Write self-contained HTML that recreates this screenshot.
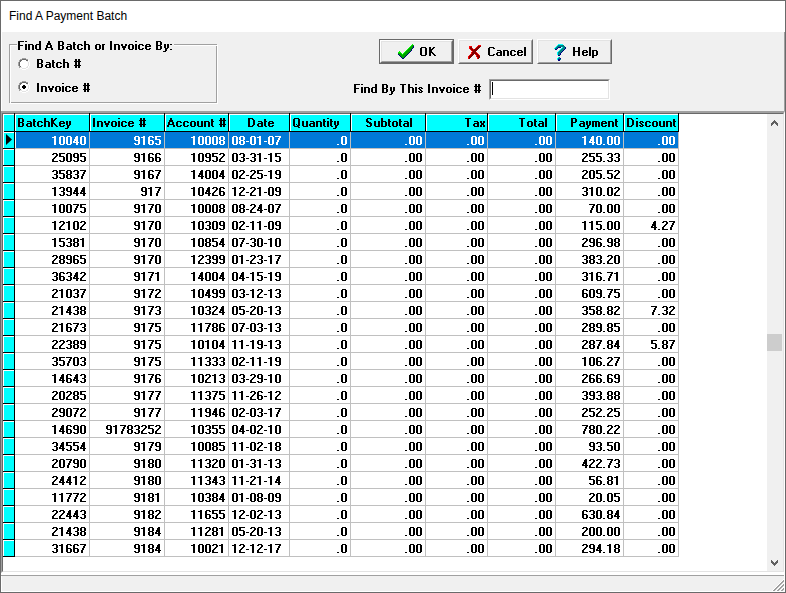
<!DOCTYPE html>
<html><head><meta charset="utf-8"><style>
*{margin:0;padding:0;box-sizing:border-box}
html,body{width:786px;height:593px;overflow:hidden;background:#f0f0f0}
body{position:relative;font-family:"Liberation Sans",sans-serif;color:#000}
.a{position:absolute}
</style></head><body>

<div class="a" style="left:0;top:0;width:786px;height:593px;border:1px solid #6a6a6a"></div>
<div class="a" style="left:1px;top:1px;width:784px;height:31px;background:#fff"></div>
<div class="a" style="left:9px;top:9px;font-size:12px;line-height:14px;white-space:pre">Find A Payment Batch</div>
<div class="a" style="left:1px;top:32px;width:1px;height:560px;background:#fff"></div>
<div class="a" style="left:784px;top:32px;width:1px;height:80px;background:#a0a0a0"></div>
<div class="a" style="left:9px;top:44px;width:208px;height:59px;border:1px solid #a0a0a0"></div>
<div class="a" style="left:10px;top:45px;width:208px;height:59px;border:1px solid #fff;border-left-color:#fff"></div>
<div class="a" style="left:10px;top:45px;width:206px;height:57px;border-top:0;border-left:1px solid #fff;border-top:1px solid #fff"></div>
<div class="a" style="left:17px;top:43px;width:157px;height:4px;background:#f0f0f0"></div>
<svg class="a" style="left:18px;top:58px" width="12" height="12" shape-rendering="crispEdges"><rect x="4" y="0" width="1" height="1" fill="#a0a0a0"/><rect x="5" y="0" width="1" height="1" fill="#a0a0a0"/><rect x="6" y="0" width="1" height="1" fill="#a0a0a0"/><rect x="7" y="0" width="1" height="1" fill="#a0a0a0"/><rect x="2" y="1" width="1" height="1" fill="#a0a0a0"/><rect x="3" y="1" width="1" height="1" fill="#a0a0a0"/><rect x="4" y="1" width="1" height="1" fill="#696969"/><rect x="5" y="1" width="1" height="1" fill="#696969"/><rect x="6" y="1" width="1" height="1" fill="#696969"/><rect x="7" y="1" width="1" height="1" fill="#696969"/><rect x="8" y="1" width="1" height="1" fill="#a0a0a0"/><rect x="9" y="1" width="1" height="1" fill="#a0a0a0"/><rect x="1" y="2" width="1" height="1" fill="#a0a0a0"/><rect x="2" y="2" width="1" height="1" fill="#696969"/><rect x="3" y="2" width="1" height="1" fill="#696969"/><rect x="4" y="2" width="1" height="1" fill="#fff"/><rect x="5" y="2" width="1" height="1" fill="#fff"/><rect x="6" y="2" width="1" height="1" fill="#fff"/><rect x="7" y="2" width="1" height="1" fill="#fff"/><rect x="8" y="2" width="1" height="1" fill="#696969"/><rect x="9" y="2" width="1" height="1" fill="#696969"/><rect x="10" y="2" width="1" height="1" fill="#fff"/><rect x="1" y="3" width="1" height="1" fill="#a0a0a0"/><rect x="2" y="3" width="1" height="1" fill="#696969"/><rect x="3" y="3" width="1" height="1" fill="#fff"/><rect x="4" y="3" width="1" height="1" fill="#fff"/><rect x="5" y="3" width="1" height="1" fill="#fff"/><rect x="6" y="3" width="1" height="1" fill="#fff"/><rect x="7" y="3" width="1" height="1" fill="#fff"/><rect x="8" y="3" width="1" height="1" fill="#fff"/><rect x="9" y="3" width="1" height="1" fill="#e3e3e3"/><rect x="10" y="3" width="1" height="1" fill="#fff"/><rect x="0" y="4" width="1" height="1" fill="#a0a0a0"/><rect x="1" y="4" width="1" height="1" fill="#696969"/><rect x="2" y="4" width="1" height="1" fill="#fff"/><rect x="3" y="4" width="1" height="1" fill="#fff"/><rect x="4" y="4" width="1" height="1" fill="#fff"/><rect x="5" y="4" width="1" height="1" fill="#fff"/><rect x="6" y="4" width="1" height="1" fill="#fff"/><rect x="7" y="4" width="1" height="1" fill="#fff"/><rect x="8" y="4" width="1" height="1" fill="#fff"/><rect x="9" y="4" width="1" height="1" fill="#fff"/><rect x="10" y="4" width="1" height="1" fill="#e3e3e3"/><rect x="11" y="4" width="1" height="1" fill="#fff"/><rect x="0" y="5" width="1" height="1" fill="#a0a0a0"/><rect x="1" y="5" width="1" height="1" fill="#696969"/><rect x="2" y="5" width="1" height="1" fill="#fff"/><rect x="3" y="5" width="1" height="1" fill="#fff"/><rect x="4" y="5" width="1" height="1" fill="#fff"/><rect x="5" y="5" width="1" height="1" fill="#fff"/><rect x="6" y="5" width="1" height="1" fill="#fff"/><rect x="7" y="5" width="1" height="1" fill="#fff"/><rect x="8" y="5" width="1" height="1" fill="#fff"/><rect x="9" y="5" width="1" height="1" fill="#fff"/><rect x="10" y="5" width="1" height="1" fill="#e3e3e3"/><rect x="11" y="5" width="1" height="1" fill="#fff"/><rect x="0" y="6" width="1" height="1" fill="#a0a0a0"/><rect x="1" y="6" width="1" height="1" fill="#696969"/><rect x="2" y="6" width="1" height="1" fill="#fff"/><rect x="3" y="6" width="1" height="1" fill="#fff"/><rect x="4" y="6" width="1" height="1" fill="#fff"/><rect x="5" y="6" width="1" height="1" fill="#fff"/><rect x="6" y="6" width="1" height="1" fill="#fff"/><rect x="7" y="6" width="1" height="1" fill="#fff"/><rect x="8" y="6" width="1" height="1" fill="#fff"/><rect x="9" y="6" width="1" height="1" fill="#fff"/><rect x="10" y="6" width="1" height="1" fill="#e3e3e3"/><rect x="11" y="6" width="1" height="1" fill="#fff"/><rect x="0" y="7" width="1" height="1" fill="#a0a0a0"/><rect x="1" y="7" width="1" height="1" fill="#696969"/><rect x="2" y="7" width="1" height="1" fill="#fff"/><rect x="3" y="7" width="1" height="1" fill="#fff"/><rect x="4" y="7" width="1" height="1" fill="#fff"/><rect x="5" y="7" width="1" height="1" fill="#fff"/><rect x="6" y="7" width="1" height="1" fill="#fff"/><rect x="7" y="7" width="1" height="1" fill="#fff"/><rect x="8" y="7" width="1" height="1" fill="#fff"/><rect x="9" y="7" width="1" height="1" fill="#fff"/><rect x="10" y="7" width="1" height="1" fill="#e3e3e3"/><rect x="11" y="7" width="1" height="1" fill="#fff"/><rect x="1" y="8" width="1" height="1" fill="#a0a0a0"/><rect x="2" y="8" width="1" height="1" fill="#696969"/><rect x="3" y="8" width="1" height="1" fill="#fff"/><rect x="4" y="8" width="1" height="1" fill="#fff"/><rect x="5" y="8" width="1" height="1" fill="#fff"/><rect x="6" y="8" width="1" height="1" fill="#fff"/><rect x="7" y="8" width="1" height="1" fill="#fff"/><rect x="8" y="8" width="1" height="1" fill="#fff"/><rect x="9" y="8" width="1" height="1" fill="#e3e3e3"/><rect x="10" y="8" width="1" height="1" fill="#fff"/><rect x="1" y="9" width="1" height="1" fill="#a0a0a0"/><rect x="2" y="9" width="1" height="1" fill="#e3e3e3"/><rect x="3" y="9" width="1" height="1" fill="#e3e3e3"/><rect x="4" y="9" width="1" height="1" fill="#fff"/><rect x="5" y="9" width="1" height="1" fill="#fff"/><rect x="6" y="9" width="1" height="1" fill="#fff"/><rect x="7" y="9" width="1" height="1" fill="#fff"/><rect x="8" y="9" width="1" height="1" fill="#e3e3e3"/><rect x="9" y="9" width="1" height="1" fill="#e3e3e3"/><rect x="10" y="9" width="1" height="1" fill="#fff"/><rect x="2" y="10" width="1" height="1" fill="#fff"/><rect x="3" y="10" width="1" height="1" fill="#fff"/><rect x="4" y="10" width="1" height="1" fill="#e3e3e3"/><rect x="5" y="10" width="1" height="1" fill="#e3e3e3"/><rect x="6" y="10" width="1" height="1" fill="#e3e3e3"/><rect x="7" y="10" width="1" height="1" fill="#e3e3e3"/><rect x="8" y="10" width="1" height="1" fill="#fff"/><rect x="9" y="10" width="1" height="1" fill="#fff"/><rect x="4" y="11" width="1" height="1" fill="#fff"/><rect x="5" y="11" width="1" height="1" fill="#fff"/><rect x="6" y="11" width="1" height="1" fill="#fff"/><rect x="7" y="11" width="1" height="1" fill="#fff"/></svg>
<svg class="a" style="left:18px;top:81px" width="12" height="12" shape-rendering="crispEdges"><rect x="4" y="0" width="1" height="1" fill="#a0a0a0"/><rect x="5" y="0" width="1" height="1" fill="#a0a0a0"/><rect x="6" y="0" width="1" height="1" fill="#a0a0a0"/><rect x="7" y="0" width="1" height="1" fill="#a0a0a0"/><rect x="2" y="1" width="1" height="1" fill="#a0a0a0"/><rect x="3" y="1" width="1" height="1" fill="#a0a0a0"/><rect x="4" y="1" width="1" height="1" fill="#696969"/><rect x="5" y="1" width="1" height="1" fill="#696969"/><rect x="6" y="1" width="1" height="1" fill="#696969"/><rect x="7" y="1" width="1" height="1" fill="#696969"/><rect x="8" y="1" width="1" height="1" fill="#a0a0a0"/><rect x="9" y="1" width="1" height="1" fill="#a0a0a0"/><rect x="1" y="2" width="1" height="1" fill="#a0a0a0"/><rect x="2" y="2" width="1" height="1" fill="#696969"/><rect x="3" y="2" width="1" height="1" fill="#696969"/><rect x="4" y="2" width="1" height="1" fill="#fff"/><rect x="5" y="2" width="1" height="1" fill="#fff"/><rect x="6" y="2" width="1" height="1" fill="#fff"/><rect x="7" y="2" width="1" height="1" fill="#fff"/><rect x="8" y="2" width="1" height="1" fill="#696969"/><rect x="9" y="2" width="1" height="1" fill="#696969"/><rect x="10" y="2" width="1" height="1" fill="#fff"/><rect x="1" y="3" width="1" height="1" fill="#a0a0a0"/><rect x="2" y="3" width="1" height="1" fill="#696969"/><rect x="3" y="3" width="1" height="1" fill="#fff"/><rect x="4" y="3" width="1" height="1" fill="#fff"/><rect x="5" y="3" width="1" height="1" fill="#fff"/><rect x="6" y="3" width="1" height="1" fill="#fff"/><rect x="7" y="3" width="1" height="1" fill="#fff"/><rect x="8" y="3" width="1" height="1" fill="#fff"/><rect x="9" y="3" width="1" height="1" fill="#e3e3e3"/><rect x="10" y="3" width="1" height="1" fill="#fff"/><rect x="0" y="4" width="1" height="1" fill="#a0a0a0"/><rect x="1" y="4" width="1" height="1" fill="#696969"/><rect x="2" y="4" width="1" height="1" fill="#fff"/><rect x="3" y="4" width="1" height="1" fill="#fff"/><rect x="4" y="4" width="1" height="1" fill="#fff"/><rect x="5" y="4" width="1" height="1" fill="#000"/><rect x="6" y="4" width="1" height="1" fill="#000"/><rect x="7" y="4" width="1" height="1" fill="#fff"/><rect x="8" y="4" width="1" height="1" fill="#fff"/><rect x="9" y="4" width="1" height="1" fill="#fff"/><rect x="10" y="4" width="1" height="1" fill="#e3e3e3"/><rect x="11" y="4" width="1" height="1" fill="#fff"/><rect x="0" y="5" width="1" height="1" fill="#a0a0a0"/><rect x="1" y="5" width="1" height="1" fill="#696969"/><rect x="2" y="5" width="1" height="1" fill="#fff"/><rect x="3" y="5" width="1" height="1" fill="#fff"/><rect x="4" y="5" width="1" height="1" fill="#000"/><rect x="5" y="5" width="1" height="1" fill="#000"/><rect x="6" y="5" width="1" height="1" fill="#000"/><rect x="7" y="5" width="1" height="1" fill="#000"/><rect x="8" y="5" width="1" height="1" fill="#fff"/><rect x="9" y="5" width="1" height="1" fill="#fff"/><rect x="10" y="5" width="1" height="1" fill="#e3e3e3"/><rect x="11" y="5" width="1" height="1" fill="#fff"/><rect x="0" y="6" width="1" height="1" fill="#a0a0a0"/><rect x="1" y="6" width="1" height="1" fill="#696969"/><rect x="2" y="6" width="1" height="1" fill="#fff"/><rect x="3" y="6" width="1" height="1" fill="#fff"/><rect x="4" y="6" width="1" height="1" fill="#000"/><rect x="5" y="6" width="1" height="1" fill="#000"/><rect x="6" y="6" width="1" height="1" fill="#000"/><rect x="7" y="6" width="1" height="1" fill="#000"/><rect x="8" y="6" width="1" height="1" fill="#fff"/><rect x="9" y="6" width="1" height="1" fill="#fff"/><rect x="10" y="6" width="1" height="1" fill="#e3e3e3"/><rect x="11" y="6" width="1" height="1" fill="#fff"/><rect x="0" y="7" width="1" height="1" fill="#a0a0a0"/><rect x="1" y="7" width="1" height="1" fill="#696969"/><rect x="2" y="7" width="1" height="1" fill="#fff"/><rect x="3" y="7" width="1" height="1" fill="#fff"/><rect x="4" y="7" width="1" height="1" fill="#fff"/><rect x="5" y="7" width="1" height="1" fill="#000"/><rect x="6" y="7" width="1" height="1" fill="#000"/><rect x="7" y="7" width="1" height="1" fill="#fff"/><rect x="8" y="7" width="1" height="1" fill="#fff"/><rect x="9" y="7" width="1" height="1" fill="#fff"/><rect x="10" y="7" width="1" height="1" fill="#e3e3e3"/><rect x="11" y="7" width="1" height="1" fill="#fff"/><rect x="1" y="8" width="1" height="1" fill="#a0a0a0"/><rect x="2" y="8" width="1" height="1" fill="#696969"/><rect x="3" y="8" width="1" height="1" fill="#fff"/><rect x="4" y="8" width="1" height="1" fill="#fff"/><rect x="5" y="8" width="1" height="1" fill="#fff"/><rect x="6" y="8" width="1" height="1" fill="#fff"/><rect x="7" y="8" width="1" height="1" fill="#fff"/><rect x="8" y="8" width="1" height="1" fill="#fff"/><rect x="9" y="8" width="1" height="1" fill="#e3e3e3"/><rect x="10" y="8" width="1" height="1" fill="#fff"/><rect x="1" y="9" width="1" height="1" fill="#a0a0a0"/><rect x="2" y="9" width="1" height="1" fill="#e3e3e3"/><rect x="3" y="9" width="1" height="1" fill="#e3e3e3"/><rect x="4" y="9" width="1" height="1" fill="#fff"/><rect x="5" y="9" width="1" height="1" fill="#fff"/><rect x="6" y="9" width="1" height="1" fill="#fff"/><rect x="7" y="9" width="1" height="1" fill="#fff"/><rect x="8" y="9" width="1" height="1" fill="#e3e3e3"/><rect x="9" y="9" width="1" height="1" fill="#e3e3e3"/><rect x="10" y="9" width="1" height="1" fill="#fff"/><rect x="2" y="10" width="1" height="1" fill="#fff"/><rect x="3" y="10" width="1" height="1" fill="#fff"/><rect x="4" y="10" width="1" height="1" fill="#e3e3e3"/><rect x="5" y="10" width="1" height="1" fill="#e3e3e3"/><rect x="6" y="10" width="1" height="1" fill="#e3e3e3"/><rect x="7" y="10" width="1" height="1" fill="#e3e3e3"/><rect x="8" y="10" width="1" height="1" fill="#fff"/><rect x="9" y="10" width="1" height="1" fill="#fff"/><rect x="4" y="11" width="1" height="1" fill="#fff"/><rect x="5" y="11" width="1" height="1" fill="#fff"/><rect x="6" y="11" width="1" height="1" fill="#fff"/><rect x="7" y="11" width="1" height="1" fill="#fff"/></svg>
<div class="a" style="left:379px;top:39px;width:75px;height:25px;border:1px solid #696969"></div><div class="a" style="left:380px;top:40px;width:73px;height:23px;border-top:1px solid #fff;border-left:1px solid #fff;border-right:1px solid #696969;border-bottom:1px solid #696969"></div><div class="a" style="left:381px;top:41px;width:71px;height:21px;border-top:1px solid #e3e3e3;border-left:1px solid #e3e3e3;border-right:1px solid #a0a0a0;border-bottom:1px solid #a0a0a0"></div><svg class="a" style="left:396px;top:42px" width="18" height="17" shape-rendering="crispEdges"><rect x="16" y="2" width="1" height="1" fill="#00ff00"/><rect x="15" y="3" width="1" height="1" fill="#00ff00"/><rect x="16" y="3" width="2" height="1" fill="#00a000"/><rect x="14" y="4" width="1" height="1" fill="#00ff00"/><rect x="15" y="4" width="2" height="1" fill="#00a000"/><rect x="17" y="4" width="1" height="1" fill="#000080"/><rect x="13" y="5" width="1" height="1" fill="#00ff00"/><rect x="14" y="5" width="3" height="1" fill="#00a000"/><rect x="17" y="5" width="1" height="1" fill="#000080"/><rect x="12" y="6" width="1" height="1" fill="#00ff00"/><rect x="13" y="6" width="3" height="1" fill="#00a000"/><rect x="16" y="6" width="1" height="1" fill="#000080"/><rect x="11" y="7" width="1" height="1" fill="#00ff00"/><rect x="12" y="7" width="3" height="1" fill="#00a000"/><rect x="15" y="7" width="1" height="1" fill="#000080"/><rect x="10" y="8" width="1" height="1" fill="#00ff00"/><rect x="11" y="8" width="4" height="1" fill="#00a000"/><rect x="15" y="8" width="1" height="1" fill="#000080"/><rect x="3" y="9" width="1" height="1" fill="#00ff00"/><rect x="9" y="9" width="1" height="1" fill="#00ff00"/><rect x="10" y="9" width="4" height="1" fill="#00a000"/><rect x="14" y="9" width="1" height="1" fill="#000080"/><rect x="2" y="10" width="3" height="1" fill="#00ff00"/><rect x="8" y="10" width="1" height="1" fill="#00ff00"/><rect x="9" y="10" width="4" height="1" fill="#00a000"/><rect x="13" y="10" width="1" height="1" fill="#000080"/><rect x="2" y="11" width="3" height="1" fill="#00a000"/><rect x="5" y="11" width="1" height="1" fill="#00ff00"/><rect x="7" y="11" width="1" height="1" fill="#00ff00"/><rect x="8" y="11" width="4" height="1" fill="#00a000"/><rect x="12" y="11" width="1" height="1" fill="#000080"/><rect x="2" y="12" width="1" height="1" fill="#000080"/><rect x="3" y="12" width="3" height="1" fill="#00a000"/><rect x="6" y="12" width="1" height="1" fill="#00ff00"/><rect x="7" y="12" width="4" height="1" fill="#00a000"/><rect x="11" y="12" width="1" height="1" fill="#000080"/><rect x="3" y="13" width="1" height="1" fill="#000080"/><rect x="4" y="13" width="6" height="1" fill="#00a000"/><rect x="10" y="13" width="1" height="1" fill="#000080"/><rect x="4" y="14" width="1" height="1" fill="#000080"/><rect x="5" y="14" width="4" height="1" fill="#00a000"/><rect x="9" y="14" width="1" height="1" fill="#000080"/><rect x="5" y="15" width="1" height="1" fill="#000080"/><rect x="6" y="15" width="2" height="1" fill="#00a000"/><rect x="8" y="15" width="1" height="1" fill="#000080"/><rect x="6" y="16" width="2" height="1" fill="#000080"/></svg>
<div class="a" style="left:458px;top:39px;width:75px;height:25px;border-top:1px solid #fff;border-left:1px solid #fff;border-right:1px solid #696969;border-bottom:1px solid #696969"></div><div class="a" style="left:459px;top:40px;width:73px;height:23px;border-top:1px solid #e3e3e3;border-left:1px solid #e3e3e3;border-right:1px solid #a0a0a0;border-bottom:1px solid #a0a0a0"></div><svg class="a" style="left:465px;top:42px" width="17" height="17" shape-rendering="crispEdges"><rect x="13" y="3" width="3" height="1" fill="#ff0000"/><rect x="4" y="4" width="3" height="1" fill="#ff0000"/><rect x="12" y="4" width="1" height="1" fill="#ff0000"/><rect x="13" y="4" width="3" height="1" fill="#800000"/><rect x="4" y="5" width="1" height="1" fill="#ff0000"/><rect x="5" y="5" width="2" height="1" fill="#800000"/><rect x="11" y="5" width="1" height="1" fill="#ff0000"/><rect x="12" y="5" width="3" height="1" fill="#800000"/><rect x="4" y="6" width="1" height="1" fill="#ff0000"/><rect x="5" y="6" width="2" height="1" fill="#800000"/><rect x="7" y="6" width="1" height="1" fill="#ff0000"/><rect x="10" y="6" width="1" height="1" fill="#ff0000"/><rect x="11" y="6" width="3" height="1" fill="#800000"/><rect x="5" y="7" width="1" height="1" fill="#ff0000"/><rect x="6" y="7" width="2" height="1" fill="#800000"/><rect x="8" y="7" width="1" height="1" fill="#ff0000"/><rect x="9" y="7" width="4" height="1" fill="#800000"/><rect x="6" y="8" width="1" height="1" fill="#ff0000"/><rect x="7" y="8" width="5" height="1" fill="#800000"/><rect x="7" y="9" width="1" height="1" fill="#ff0000"/><rect x="8" y="9" width="3" height="1" fill="#800000"/><rect x="6" y="10" width="1" height="1" fill="#ff0000"/><rect x="7" y="10" width="4" height="1" fill="#800000"/><rect x="11" y="10" width="1" height="1" fill="#ff0000"/><rect x="6" y="11" width="1" height="1" fill="#ff0000"/><rect x="7" y="11" width="5" height="1" fill="#800000"/><rect x="12" y="11" width="1" height="1" fill="#ff0000"/><rect x="5" y="12" width="1" height="1" fill="#ff0000"/><rect x="6" y="12" width="3" height="1" fill="#800000"/><rect x="10" y="12" width="1" height="1" fill="#ff0000"/><rect x="11" y="12" width="2" height="1" fill="#800000"/><rect x="13" y="12" width="1" height="1" fill="#ff0000"/><rect x="4" y="13" width="1" height="1" fill="#ff0000"/><rect x="5" y="13" width="3" height="1" fill="#800000"/><rect x="11" y="13" width="1" height="1" fill="#ff0000"/><rect x="12" y="13" width="2" height="1" fill="#800000"/><rect x="14" y="13" width="1" height="1" fill="#ff0000"/><rect x="3" y="14" width="1" height="1" fill="#ff0000"/><rect x="4" y="14" width="3" height="1" fill="#800000"/><rect x="11" y="14" width="1" height="1" fill="#ff0000"/><rect x="12" y="14" width="3" height="1" fill="#800000"/><rect x="3" y="15" width="1" height="1" fill="#ff0000"/><rect x="4" y="15" width="2" height="1" fill="#800000"/><rect x="12" y="15" width="1" height="1" fill="#ff0000"/><rect x="13" y="15" width="2" height="1" fill="#800000"/><rect x="3" y="16" width="1" height="1" fill="#ff0000"/><rect x="4" y="16" width="1" height="1" fill="#800000"/><rect x="12" y="16" width="1" height="1" fill="#ff0000"/><rect x="13" y="16" width="1" height="1" fill="#800000"/></svg>
<div class="a" style="left:537px;top:39px;width:75px;height:25px;border-top:1px solid #fff;border-left:1px solid #fff;border-right:1px solid #696969;border-bottom:1px solid #696969"></div><div class="a" style="left:538px;top:40px;width:73px;height:23px;border-top:1px solid #e3e3e3;border-left:1px solid #e3e3e3;border-right:1px solid #a0a0a0;border-bottom:1px solid #a0a0a0"></div><svg class="a" style="left:554px;top:42px" width="15" height="19" shape-rendering="crispEdges"><rect x="4" y="2" width="5" height="1" fill="#00ffff"/><rect x="3" y="3" width="1" height="1" fill="#00ffff"/><rect x="4" y="3" width="6" height="1" fill="#008080"/><rect x="2" y="4" width="1" height="1" fill="#00ffff"/><rect x="3" y="4" width="8" height="1" fill="#008080"/><rect x="1" y="5" width="1" height="1" fill="#00ffff"/><rect x="2" y="5" width="2" height="1" fill="#008080"/><rect x="4" y="5" width="3" height="1" fill="#000080"/><rect x="8" y="5" width="1" height="1" fill="#00ffff"/><rect x="9" y="5" width="2" height="1" fill="#008080"/><rect x="11" y="5" width="1" height="1" fill="#000080"/><rect x="0" y="6" width="1" height="1" fill="#00ffff"/><rect x="1" y="6" width="2" height="1" fill="#008080"/><rect x="3" y="6" width="1" height="1" fill="#000080"/><rect x="7" y="6" width="1" height="1" fill="#00ffff"/><rect x="8" y="6" width="3" height="1" fill="#008080"/><rect x="11" y="6" width="1" height="1" fill="#000080"/><rect x="1" y="7" width="2" height="1" fill="#000080"/><rect x="6" y="7" width="1" height="1" fill="#00ffff"/><rect x="7" y="7" width="3" height="1" fill="#008080"/><rect x="10" y="7" width="1" height="1" fill="#000080"/><rect x="5" y="8" width="1" height="1" fill="#00ffff"/><rect x="6" y="8" width="3" height="1" fill="#008080"/><rect x="9" y="8" width="1" height="1" fill="#000080"/><rect x="4" y="9" width="1" height="1" fill="#00ffff"/><rect x="5" y="9" width="3" height="1" fill="#008080"/><rect x="8" y="9" width="1" height="1" fill="#000080"/><rect x="3" y="10" width="1" height="1" fill="#00ffff"/><rect x="4" y="10" width="3" height="1" fill="#008080"/><rect x="7" y="10" width="1" height="1" fill="#000080"/><rect x="3" y="11" width="1" height="1" fill="#00ffff"/><rect x="4" y="11" width="2" height="1" fill="#008080"/><rect x="6" y="11" width="1" height="1" fill="#000080"/><rect x="3" y="12" width="1" height="1" fill="#00ffff"/><rect x="4" y="12" width="2" height="1" fill="#008080"/><rect x="6" y="12" width="1" height="1" fill="#000080"/><rect x="4" y="13" width="2" height="1" fill="#000080"/><rect x="4" y="15" width="1" height="1" fill="#00ffff"/><rect x="5" y="15" width="1" height="1" fill="#008080"/><rect x="3" y="16" width="1" height="1" fill="#00ffff"/><rect x="4" y="16" width="2" height="1" fill="#008080"/><rect x="6" y="16" width="1" height="1" fill="#000080"/><rect x="3" y="17" width="1" height="1" fill="#00ffff"/><rect x="4" y="17" width="2" height="1" fill="#000080"/><rect x="6" y="17" width="1" height="1" fill="#008080"/><rect x="4" y="18" width="2" height="1" fill="#000080"/></svg>
<div class="a" style="left:489px;top:79px;width:121px;height:21px;border-top:1px solid #a0a0a0;border-left:1px solid #a0a0a0;border-right:1px solid #fff;border-bottom:1px solid #fff"></div>
<div class="a" style="left:490px;top:80px;width:119px;height:19px;background:#fff;border-top:1px solid #696969;border-left:1px solid #696969;border-right:1px solid #e3e3e3;border-bottom:1px solid #e3e3e3"></div>
<div class="a" style="left:492px;top:82px;width:1px;height:13px;background:#000"></div>
<div class="a" style="left:1px;top:111px;width:784px;height:462px;border-top:2px solid #a0a0a0;border-left:1px solid #a0a0a0;border-right:1px solid #fff;border-bottom:1px solid #fff"></div>
<div class="a" style="left:2px;top:113px;width:782px;height:459px;background:#fff;border-top:1px solid #696969;border-left:1px solid #696969;border-right:1px solid #e3e3e3;border-bottom:1px solid #e3e3e3"></div>
<div class="a" style="left:3px;top:114px;width:676px;height:18px;background:#0ff"></div>
<div class="a" style="left:3px;top:131px;width:676px;height:1px;background:#000"></div>
<div class="a" style="left:3px;top:114px;width:675px;height:1px;background:#fff"></div>
<div class="a" style="left:3px;top:132px;width:12px;height:425px;background:#0ff"></div>
<div class="a" style="left:3px;top:114px;width:1px;height:442px;background:#fff"></div>
<div class="a" style="left:14px;top:113px;width:1px;height:19px;background:#000"></div>
<div class="a" style="left:89px;top:113px;width:1px;height:19px;background:#000"></div>
<div class="a" style="left:90px;top:114px;width:1px;height:17px;background:#fff"></div>
<div class="a" style="left:164px;top:113px;width:1px;height:19px;background:#000"></div>
<div class="a" style="left:165px;top:114px;width:1px;height:17px;background:#fff"></div>
<div class="a" style="left:228px;top:113px;width:1px;height:19px;background:#000"></div>
<div class="a" style="left:229px;top:114px;width:1px;height:17px;background:#fff"></div>
<div class="a" style="left:289px;top:113px;width:1px;height:19px;background:#000"></div>
<div class="a" style="left:290px;top:114px;width:1px;height:17px;background:#fff"></div>
<div class="a" style="left:350px;top:113px;width:1px;height:19px;background:#000"></div>
<div class="a" style="left:351px;top:114px;width:1px;height:17px;background:#fff"></div>
<div class="a" style="left:425px;top:113px;width:1px;height:19px;background:#000"></div>
<div class="a" style="left:426px;top:114px;width:1px;height:17px;background:#fff"></div>
<div class="a" style="left:487px;top:113px;width:1px;height:19px;background:#000"></div>
<div class="a" style="left:488px;top:114px;width:1px;height:17px;background:#fff"></div>
<div class="a" style="left:555px;top:113px;width:1px;height:19px;background:#000"></div>
<div class="a" style="left:556px;top:114px;width:1px;height:17px;background:#fff"></div>
<div class="a" style="left:623px;top:113px;width:1px;height:19px;background:#000"></div>
<div class="a" style="left:624px;top:114px;width:1px;height:17px;background:#fff"></div>
<div class="a" style="left:678px;top:113px;width:1px;height:19px;background:#000"></div>
<div class="a" style="left:679px;top:114px;width:1px;height:17px;background:#fff"></div>
<div class="a" style="left:15px;top:114px;width:1px;height:17px;background:#fff"></div>
<div class="a" style="left:14px;top:132px;width:1px;height:425px;background:#000"></div>
<div class="a" style="left:16px;top:132px;width:662px;height:16px;background:#0078d7"></div>
<div class="a" style="left:89px;top:132px;width:1px;height:425px;background:#c0c0c0"></div>
<div class="a" style="left:164px;top:132px;width:1px;height:425px;background:#c0c0c0"></div>
<div class="a" style="left:228px;top:132px;width:1px;height:425px;background:#c0c0c0"></div>
<div class="a" style="left:289px;top:132px;width:1px;height:425px;background:#c0c0c0"></div>
<div class="a" style="left:350px;top:132px;width:1px;height:425px;background:#c0c0c0"></div>
<div class="a" style="left:425px;top:132px;width:1px;height:425px;background:#c0c0c0"></div>
<div class="a" style="left:487px;top:132px;width:1px;height:425px;background:#c0c0c0"></div>
<div class="a" style="left:555px;top:132px;width:1px;height:425px;background:#c0c0c0"></div>
<div class="a" style="left:623px;top:132px;width:1px;height:425px;background:#c0c0c0"></div>
<div class="a" style="left:678px;top:132px;width:1px;height:425px;background:#c0c0c0"></div>
<div class="a" style="left:3px;top:132px;width:11px;height:1px;background:#fff"></div>
<div class="a" style="left:3px;top:148px;width:12px;height:1px;background:#000"></div>
<div class="a" style="left:15px;top:148px;width:664px;height:1px;background:#c0c0c0"></div>
<div class="a" style="left:3px;top:149px;width:11px;height:1px;background:#fff"></div>
<div class="a" style="left:3px;top:165px;width:12px;height:1px;background:#000"></div>
<div class="a" style="left:15px;top:165px;width:664px;height:1px;background:#c0c0c0"></div>
<div class="a" style="left:3px;top:166px;width:11px;height:1px;background:#fff"></div>
<div class="a" style="left:3px;top:182px;width:12px;height:1px;background:#000"></div>
<div class="a" style="left:15px;top:182px;width:664px;height:1px;background:#c0c0c0"></div>
<div class="a" style="left:3px;top:183px;width:11px;height:1px;background:#fff"></div>
<div class="a" style="left:3px;top:199px;width:12px;height:1px;background:#000"></div>
<div class="a" style="left:15px;top:199px;width:664px;height:1px;background:#c0c0c0"></div>
<div class="a" style="left:3px;top:200px;width:11px;height:1px;background:#fff"></div>
<div class="a" style="left:3px;top:216px;width:12px;height:1px;background:#000"></div>
<div class="a" style="left:15px;top:216px;width:664px;height:1px;background:#c0c0c0"></div>
<div class="a" style="left:3px;top:217px;width:11px;height:1px;background:#fff"></div>
<div class="a" style="left:3px;top:233px;width:12px;height:1px;background:#000"></div>
<div class="a" style="left:15px;top:233px;width:664px;height:1px;background:#c0c0c0"></div>
<div class="a" style="left:3px;top:234px;width:11px;height:1px;background:#fff"></div>
<div class="a" style="left:3px;top:250px;width:12px;height:1px;background:#000"></div>
<div class="a" style="left:15px;top:250px;width:664px;height:1px;background:#c0c0c0"></div>
<div class="a" style="left:3px;top:251px;width:11px;height:1px;background:#fff"></div>
<div class="a" style="left:3px;top:267px;width:12px;height:1px;background:#000"></div>
<div class="a" style="left:15px;top:267px;width:664px;height:1px;background:#c0c0c0"></div>
<div class="a" style="left:3px;top:268px;width:11px;height:1px;background:#fff"></div>
<div class="a" style="left:3px;top:284px;width:12px;height:1px;background:#000"></div>
<div class="a" style="left:15px;top:284px;width:664px;height:1px;background:#c0c0c0"></div>
<div class="a" style="left:3px;top:285px;width:11px;height:1px;background:#fff"></div>
<div class="a" style="left:3px;top:301px;width:12px;height:1px;background:#000"></div>
<div class="a" style="left:15px;top:301px;width:664px;height:1px;background:#c0c0c0"></div>
<div class="a" style="left:3px;top:302px;width:11px;height:1px;background:#fff"></div>
<div class="a" style="left:3px;top:318px;width:12px;height:1px;background:#000"></div>
<div class="a" style="left:15px;top:318px;width:664px;height:1px;background:#c0c0c0"></div>
<div class="a" style="left:3px;top:319px;width:11px;height:1px;background:#fff"></div>
<div class="a" style="left:3px;top:335px;width:12px;height:1px;background:#000"></div>
<div class="a" style="left:15px;top:335px;width:664px;height:1px;background:#c0c0c0"></div>
<div class="a" style="left:3px;top:336px;width:11px;height:1px;background:#fff"></div>
<div class="a" style="left:3px;top:352px;width:12px;height:1px;background:#000"></div>
<div class="a" style="left:15px;top:352px;width:664px;height:1px;background:#c0c0c0"></div>
<div class="a" style="left:3px;top:353px;width:11px;height:1px;background:#fff"></div>
<div class="a" style="left:3px;top:369px;width:12px;height:1px;background:#000"></div>
<div class="a" style="left:15px;top:369px;width:664px;height:1px;background:#c0c0c0"></div>
<div class="a" style="left:3px;top:370px;width:11px;height:1px;background:#fff"></div>
<div class="a" style="left:3px;top:386px;width:12px;height:1px;background:#000"></div>
<div class="a" style="left:15px;top:386px;width:664px;height:1px;background:#c0c0c0"></div>
<div class="a" style="left:3px;top:387px;width:11px;height:1px;background:#fff"></div>
<div class="a" style="left:3px;top:403px;width:12px;height:1px;background:#000"></div>
<div class="a" style="left:15px;top:403px;width:664px;height:1px;background:#c0c0c0"></div>
<div class="a" style="left:3px;top:404px;width:11px;height:1px;background:#fff"></div>
<div class="a" style="left:3px;top:420px;width:12px;height:1px;background:#000"></div>
<div class="a" style="left:15px;top:420px;width:664px;height:1px;background:#c0c0c0"></div>
<div class="a" style="left:3px;top:421px;width:11px;height:1px;background:#fff"></div>
<div class="a" style="left:3px;top:437px;width:12px;height:1px;background:#000"></div>
<div class="a" style="left:15px;top:437px;width:664px;height:1px;background:#c0c0c0"></div>
<div class="a" style="left:3px;top:438px;width:11px;height:1px;background:#fff"></div>
<div class="a" style="left:3px;top:454px;width:12px;height:1px;background:#000"></div>
<div class="a" style="left:15px;top:454px;width:664px;height:1px;background:#c0c0c0"></div>
<div class="a" style="left:3px;top:455px;width:11px;height:1px;background:#fff"></div>
<div class="a" style="left:3px;top:471px;width:12px;height:1px;background:#000"></div>
<div class="a" style="left:15px;top:471px;width:664px;height:1px;background:#c0c0c0"></div>
<div class="a" style="left:3px;top:472px;width:11px;height:1px;background:#fff"></div>
<div class="a" style="left:3px;top:488px;width:12px;height:1px;background:#000"></div>
<div class="a" style="left:15px;top:488px;width:664px;height:1px;background:#c0c0c0"></div>
<div class="a" style="left:3px;top:489px;width:11px;height:1px;background:#fff"></div>
<div class="a" style="left:3px;top:505px;width:12px;height:1px;background:#000"></div>
<div class="a" style="left:15px;top:505px;width:664px;height:1px;background:#c0c0c0"></div>
<div class="a" style="left:3px;top:506px;width:11px;height:1px;background:#fff"></div>
<div class="a" style="left:3px;top:522px;width:12px;height:1px;background:#000"></div>
<div class="a" style="left:15px;top:522px;width:664px;height:1px;background:#c0c0c0"></div>
<div class="a" style="left:3px;top:523px;width:11px;height:1px;background:#fff"></div>
<div class="a" style="left:3px;top:539px;width:12px;height:1px;background:#000"></div>
<div class="a" style="left:15px;top:539px;width:664px;height:1px;background:#c0c0c0"></div>
<div class="a" style="left:3px;top:540px;width:11px;height:1px;background:#fff"></div>
<div class="a" style="left:3px;top:556px;width:12px;height:1px;background:#000"></div>
<div class="a" style="left:15px;top:556px;width:664px;height:1px;background:#c0c0c0"></div>
<svg class="a" style="left:6px;top:134px" width="6" height="11" viewBox="0 0 6 11"><path d="M0 0 L6 5.5 L0 11 Z" fill="#000"/></svg>
<div class="a" style="left:0;top:0;width:786px;height:593px;color:transparent;font:bold 12px/14px 'Liberation Sans',sans-serif;white-space:pre"><div class="a" style="left:18px;top:39px">Find A Batch or Invoice By:</div><div class="a" style="left:37px;top:57px">Batch #</div><div class="a" style="left:37px;top:81px">Invoice #</div><div class="a" style="left:420px;top:45px">OK</div><div class="a" style="left:488px;top:45px">Cancel</div><div class="a" style="left:573px;top:45px">Help</div><div class="a" style="left:354px;top:82px">Find By This Invoice #</div><div class="a" style="left:18px;top:116px">BatchKey</div><div class="a" style="left:93px;top:116px">Invoice #</div><div class="a" style="left:168px;top:116px">Account #</div><div class="a" style="left:248px;top:116px">Date</div><div class="a" style="left:293px;top:116px">Quantity</div><div class="a" style="left:366px;top:116px">Subtotal</div><div class="a" style="left:465px;top:116px">Tax</div><div class="a" style="left:519px;top:116px">Total</div><div class="a" style="left:571px;top:116px">Payment</div><div class="a" style="left:627px;top:116px">Discount</div><div class="a" style="left:52px;top:134px">10040</div><div class="a" style="left:134px;top:134px">9165</div><div class="a" style="left:191px;top:134px">10008</div><div class="a" style="left:232px;top:134px">08-01-07</div><div class="a" style="left:337px;top:134px">.0</div><div class="a" style="left:405px;top:134px">.00</div><div class="a" style="left:467px;top:134px">.00</div><div class="a" style="left:535px;top:134px">.00</div><div class="a" style="left:582px;top:134px">140.00</div><div class="a" style="left:658px;top:134px">.00</div><div class="a" style="left:52px;top:151px">25095</div><div class="a" style="left:134px;top:151px">9166</div><div class="a" style="left:191px;top:151px">10952</div><div class="a" style="left:232px;top:151px">03-31-15</div><div class="a" style="left:337px;top:151px">.0</div><div class="a" style="left:405px;top:151px">.00</div><div class="a" style="left:467px;top:151px">.00</div><div class="a" style="left:535px;top:151px">.00</div><div class="a" style="left:582px;top:151px">255.33</div><div class="a" style="left:658px;top:151px">.00</div><div class="a" style="left:52px;top:168px">35837</div><div class="a" style="left:134px;top:168px">9167</div><div class="a" style="left:191px;top:168px">14004</div><div class="a" style="left:232px;top:168px">02-25-19</div><div class="a" style="left:337px;top:168px">.0</div><div class="a" style="left:405px;top:168px">.00</div><div class="a" style="left:467px;top:168px">.00</div><div class="a" style="left:535px;top:168px">.00</div><div class="a" style="left:582px;top:168px">205.52</div><div class="a" style="left:658px;top:168px">.00</div><div class="a" style="left:52px;top:185px">13944</div><div class="a" style="left:141px;top:185px">917</div><div class="a" style="left:191px;top:185px">10426</div><div class="a" style="left:232px;top:185px">12-21-09</div><div class="a" style="left:337px;top:185px">.0</div><div class="a" style="left:405px;top:185px">.00</div><div class="a" style="left:467px;top:185px">.00</div><div class="a" style="left:535px;top:185px">.00</div><div class="a" style="left:582px;top:185px">310.02</div><div class="a" style="left:658px;top:185px">.00</div><div class="a" style="left:52px;top:202px">10075</div><div class="a" style="left:134px;top:202px">9170</div><div class="a" style="left:191px;top:202px">10008</div><div class="a" style="left:232px;top:202px">08-24-07</div><div class="a" style="left:337px;top:202px">.0</div><div class="a" style="left:405px;top:202px">.00</div><div class="a" style="left:467px;top:202px">.00</div><div class="a" style="left:535px;top:202px">.00</div><div class="a" style="left:589px;top:202px">70.00</div><div class="a" style="left:658px;top:202px">.00</div><div class="a" style="left:52px;top:219px">12102</div><div class="a" style="left:134px;top:219px">9170</div><div class="a" style="left:191px;top:219px">10309</div><div class="a" style="left:232px;top:219px">02-11-09</div><div class="a" style="left:337px;top:219px">.0</div><div class="a" style="left:405px;top:219px">.00</div><div class="a" style="left:467px;top:219px">.00</div><div class="a" style="left:535px;top:219px">.00</div><div class="a" style="left:582px;top:219px">115.00</div><div class="a" style="left:651px;top:219px">4.27</div><div class="a" style="left:52px;top:236px">15381</div><div class="a" style="left:134px;top:236px">9170</div><div class="a" style="left:191px;top:236px">10854</div><div class="a" style="left:232px;top:236px">07-30-10</div><div class="a" style="left:337px;top:236px">.0</div><div class="a" style="left:405px;top:236px">.00</div><div class="a" style="left:467px;top:236px">.00</div><div class="a" style="left:535px;top:236px">.00</div><div class="a" style="left:582px;top:236px">296.98</div><div class="a" style="left:658px;top:236px">.00</div><div class="a" style="left:52px;top:253px">28965</div><div class="a" style="left:134px;top:253px">9170</div><div class="a" style="left:191px;top:253px">12399</div><div class="a" style="left:232px;top:253px">01-23-17</div><div class="a" style="left:337px;top:253px">.0</div><div class="a" style="left:405px;top:253px">.00</div><div class="a" style="left:467px;top:253px">.00</div><div class="a" style="left:535px;top:253px">.00</div><div class="a" style="left:582px;top:253px">383.20</div><div class="a" style="left:658px;top:253px">.00</div><div class="a" style="left:52px;top:270px">36342</div><div class="a" style="left:134px;top:270px">9171</div><div class="a" style="left:191px;top:270px">14004</div><div class="a" style="left:232px;top:270px">04-15-19</div><div class="a" style="left:337px;top:270px">.0</div><div class="a" style="left:405px;top:270px">.00</div><div class="a" style="left:467px;top:270px">.00</div><div class="a" style="left:535px;top:270px">.00</div><div class="a" style="left:582px;top:270px">316.71</div><div class="a" style="left:658px;top:270px">.00</div><div class="a" style="left:52px;top:287px">21037</div><div class="a" style="left:134px;top:287px">9172</div><div class="a" style="left:191px;top:287px">10499</div><div class="a" style="left:232px;top:287px">03-12-13</div><div class="a" style="left:337px;top:287px">.0</div><div class="a" style="left:405px;top:287px">.00</div><div class="a" style="left:467px;top:287px">.00</div><div class="a" style="left:535px;top:287px">.00</div><div class="a" style="left:582px;top:287px">609.75</div><div class="a" style="left:658px;top:287px">.00</div><div class="a" style="left:52px;top:304px">21438</div><div class="a" style="left:134px;top:304px">9173</div><div class="a" style="left:191px;top:304px">10324</div><div class="a" style="left:232px;top:304px">05-20-13</div><div class="a" style="left:337px;top:304px">.0</div><div class="a" style="left:405px;top:304px">.00</div><div class="a" style="left:467px;top:304px">.00</div><div class="a" style="left:535px;top:304px">.00</div><div class="a" style="left:582px;top:304px">358.82</div><div class="a" style="left:651px;top:304px">7.32</div><div class="a" style="left:52px;top:321px">21673</div><div class="a" style="left:134px;top:321px">9175</div><div class="a" style="left:191px;top:321px">11786</div><div class="a" style="left:232px;top:321px">07-03-13</div><div class="a" style="left:337px;top:321px">.0</div><div class="a" style="left:405px;top:321px">.00</div><div class="a" style="left:467px;top:321px">.00</div><div class="a" style="left:535px;top:321px">.00</div><div class="a" style="left:582px;top:321px">289.85</div><div class="a" style="left:658px;top:321px">.00</div><div class="a" style="left:52px;top:338px">22389</div><div class="a" style="left:134px;top:338px">9175</div><div class="a" style="left:191px;top:338px">10104</div><div class="a" style="left:232px;top:338px">11-19-13</div><div class="a" style="left:337px;top:338px">.0</div><div class="a" style="left:405px;top:338px">.00</div><div class="a" style="left:467px;top:338px">.00</div><div class="a" style="left:535px;top:338px">.00</div><div class="a" style="left:582px;top:338px">287.84</div><div class="a" style="left:651px;top:338px">5.87</div><div class="a" style="left:52px;top:355px">35703</div><div class="a" style="left:134px;top:355px">9175</div><div class="a" style="left:191px;top:355px">11333</div><div class="a" style="left:232px;top:355px">02-11-19</div><div class="a" style="left:337px;top:355px">.0</div><div class="a" style="left:405px;top:355px">.00</div><div class="a" style="left:467px;top:355px">.00</div><div class="a" style="left:535px;top:355px">.00</div><div class="a" style="left:582px;top:355px">106.27</div><div class="a" style="left:658px;top:355px">.00</div><div class="a" style="left:52px;top:372px">14643</div><div class="a" style="left:134px;top:372px">9176</div><div class="a" style="left:191px;top:372px">10213</div><div class="a" style="left:232px;top:372px">03-29-10</div><div class="a" style="left:337px;top:372px">.0</div><div class="a" style="left:405px;top:372px">.00</div><div class="a" style="left:467px;top:372px">.00</div><div class="a" style="left:535px;top:372px">.00</div><div class="a" style="left:582px;top:372px">266.69</div><div class="a" style="left:658px;top:372px">.00</div><div class="a" style="left:52px;top:389px">20285</div><div class="a" style="left:134px;top:389px">9177</div><div class="a" style="left:191px;top:389px">11375</div><div class="a" style="left:232px;top:389px">11-26-12</div><div class="a" style="left:337px;top:389px">.0</div><div class="a" style="left:405px;top:389px">.00</div><div class="a" style="left:467px;top:389px">.00</div><div class="a" style="left:535px;top:389px">.00</div><div class="a" style="left:582px;top:389px">393.88</div><div class="a" style="left:658px;top:389px">.00</div><div class="a" style="left:52px;top:406px">29072</div><div class="a" style="left:134px;top:406px">9177</div><div class="a" style="left:191px;top:406px">11946</div><div class="a" style="left:232px;top:406px">02-03-17</div><div class="a" style="left:337px;top:406px">.0</div><div class="a" style="left:405px;top:406px">.00</div><div class="a" style="left:467px;top:406px">.00</div><div class="a" style="left:535px;top:406px">.00</div><div class="a" style="left:582px;top:406px">252.25</div><div class="a" style="left:658px;top:406px">.00</div><div class="a" style="left:52px;top:423px">14690</div><div class="a" style="left:106px;top:423px">91783252</div><div class="a" style="left:191px;top:423px">10355</div><div class="a" style="left:232px;top:423px">04-02-10</div><div class="a" style="left:337px;top:423px">.0</div><div class="a" style="left:405px;top:423px">.00</div><div class="a" style="left:467px;top:423px">.00</div><div class="a" style="left:535px;top:423px">.00</div><div class="a" style="left:582px;top:423px">780.22</div><div class="a" style="left:658px;top:423px">.00</div><div class="a" style="left:52px;top:440px">34554</div><div class="a" style="left:134px;top:440px">9179</div><div class="a" style="left:191px;top:440px">10085</div><div class="a" style="left:232px;top:440px">11-02-18</div><div class="a" style="left:337px;top:440px">.0</div><div class="a" style="left:405px;top:440px">.00</div><div class="a" style="left:467px;top:440px">.00</div><div class="a" style="left:535px;top:440px">.00</div><div class="a" style="left:589px;top:440px">93.50</div><div class="a" style="left:658px;top:440px">.00</div><div class="a" style="left:52px;top:457px">20790</div><div class="a" style="left:134px;top:457px">9180</div><div class="a" style="left:191px;top:457px">11320</div><div class="a" style="left:232px;top:457px">01-31-13</div><div class="a" style="left:337px;top:457px">.0</div><div class="a" style="left:405px;top:457px">.00</div><div class="a" style="left:467px;top:457px">.00</div><div class="a" style="left:535px;top:457px">.00</div><div class="a" style="left:582px;top:457px">422.73</div><div class="a" style="left:658px;top:457px">.00</div><div class="a" style="left:52px;top:474px">24412</div><div class="a" style="left:134px;top:474px">9180</div><div class="a" style="left:191px;top:474px">11343</div><div class="a" style="left:232px;top:474px">11-21-14</div><div class="a" style="left:337px;top:474px">.0</div><div class="a" style="left:405px;top:474px">.00</div><div class="a" style="left:467px;top:474px">.00</div><div class="a" style="left:535px;top:474px">.00</div><div class="a" style="left:589px;top:474px">56.81</div><div class="a" style="left:658px;top:474px">.00</div><div class="a" style="left:52px;top:491px">11772</div><div class="a" style="left:134px;top:491px">9181</div><div class="a" style="left:191px;top:491px">10384</div><div class="a" style="left:232px;top:491px">01-08-09</div><div class="a" style="left:337px;top:491px">.0</div><div class="a" style="left:405px;top:491px">.00</div><div class="a" style="left:467px;top:491px">.00</div><div class="a" style="left:535px;top:491px">.00</div><div class="a" style="left:589px;top:491px">20.05</div><div class="a" style="left:658px;top:491px">.00</div><div class="a" style="left:52px;top:508px">22443</div><div class="a" style="left:134px;top:508px">9182</div><div class="a" style="left:191px;top:508px">11655</div><div class="a" style="left:232px;top:508px">12-02-13</div><div class="a" style="left:337px;top:508px">.0</div><div class="a" style="left:405px;top:508px">.00</div><div class="a" style="left:467px;top:508px">.00</div><div class="a" style="left:535px;top:508px">.00</div><div class="a" style="left:582px;top:508px">630.84</div><div class="a" style="left:658px;top:508px">.00</div><div class="a" style="left:52px;top:525px">21438</div><div class="a" style="left:134px;top:525px">9184</div><div class="a" style="left:191px;top:525px">11281</div><div class="a" style="left:232px;top:525px">05-20-13</div><div class="a" style="left:337px;top:525px">.0</div><div class="a" style="left:405px;top:525px">.00</div><div class="a" style="left:467px;top:525px">.00</div><div class="a" style="left:535px;top:525px">.00</div><div class="a" style="left:582px;top:525px">200.00</div><div class="a" style="left:658px;top:525px">.00</div><div class="a" style="left:52px;top:542px">31667</div><div class="a" style="left:134px;top:542px">9184</div><div class="a" style="left:191px;top:542px">10021</div><div class="a" style="left:232px;top:542px">12-12-17</div><div class="a" style="left:337px;top:542px">.0</div><div class="a" style="left:405px;top:542px">.00</div><div class="a" style="left:467px;top:542px">.00</div><div class="a" style="left:535px;top:542px">.00</div><div class="a" style="left:582px;top:542px">294.18</div><div class="a" style="left:658px;top:542px">.00</div></div>
<svg class="a" style="left:0;top:0" width="786" height="593" shape-rendering="crispEdges" fill="#000"><defs><path id="Gh" d="M1 0h2v1h-2zM4 0h2v1h-2zM1 1h2v1h-2zM4 1h2v1h-2zM0 2h7v1h-7zM1 3h2v1h-2zM4 3h2v1h-2zM1 4h2v1h-2zM4 4h2v1h-2zM1 5h2v1h-2zM4 5h2v1h-2zM0 6h7v1h-7zM1 7h2v1h-2zM4 7h2v1h-2zM1 8h2v1h-2zM4 8h2v1h-2z"/><path id="Gm" d="M0 5h3v1h-3z"/><path id="Gp" d="M0 8h2v1h-2z"/><path id="g0" d="M1 0h4v1h-4zM0 1h2v1h-2zM4 1h2v1h-2zM0 2h2v1h-2zM4 2h2v1h-2zM0 3h2v1h-2zM4 3h2v1h-2zM0 4h2v1h-2zM4 4h2v1h-2zM0 5h2v1h-2zM4 5h2v1h-2zM0 6h2v1h-2zM4 6h2v1h-2zM0 7h2v1h-2zM4 7h2v1h-2zM1 8h4v1h-4z"/><path id="g1" d="M2 0h2v1h-2zM0 1h4v1h-4zM2 2h2v1h-2zM2 3h2v1h-2zM2 4h2v1h-2zM2 5h2v1h-2zM2 6h2v1h-2zM2 7h2v1h-2zM2 8h2v1h-2z"/><path id="g2" d="M1 0h4v1h-4zM0 1h2v1h-2zM4 1h2v1h-2zM4 2h2v1h-2zM3 3h2v1h-2zM2 4h2v1h-2zM1 5h2v1h-2zM0 6h2v1h-2zM0 7h2v1h-2zM0 8h6v1h-6z"/><path id="g3" d="M1 0h4v1h-4zM0 1h2v1h-2zM4 1h2v1h-2zM4 2h2v1h-2zM4 3h2v1h-2zM2 4h3v1h-3zM4 5h2v1h-2zM4 6h2v1h-2zM0 7h2v1h-2zM4 7h2v1h-2zM1 8h4v1h-4z"/><path id="g4" d="M3 0h2v1h-2zM2 1h3v1h-3zM2 2h3v1h-3zM1 3h4v1h-4zM1 4h4v1h-4zM0 5h2v1h-2zM3 5h2v1h-2zM0 6h6v1h-6zM3 7h2v1h-2zM3 8h2v1h-2z"/><path id="g5" d="M0 0h6v1h-6zM0 1h2v1h-2zM0 2h2v1h-2zM0 3h5v1h-5zM4 4h2v1h-2zM4 5h2v1h-2zM4 6h2v1h-2zM0 7h2v1h-2zM4 7h2v1h-2zM1 8h4v1h-4z"/><path id="g6" d="M1 0h4v1h-4zM0 1h2v1h-2zM4 1h2v1h-2zM0 2h2v1h-2zM0 3h2v1h-2zM0 4h5v1h-5zM0 5h2v1h-2zM4 5h2v1h-2zM0 6h2v1h-2zM4 6h2v1h-2zM0 7h2v1h-2zM4 7h2v1h-2zM1 8h4v1h-4z"/><path id="g7" d="M0 0h6v1h-6zM4 1h2v1h-2zM3 2h2v1h-2zM3 3h2v1h-2zM2 4h2v1h-2zM2 5h2v1h-2zM1 6h2v1h-2zM1 7h2v1h-2zM1 8h2v1h-2z"/><path id="g8" d="M1 0h4v1h-4zM0 1h2v1h-2zM4 1h2v1h-2zM0 2h2v1h-2zM4 2h2v1h-2zM0 3h2v1h-2zM4 3h2v1h-2zM1 4h4v1h-4zM0 5h2v1h-2zM4 5h2v1h-2zM0 6h2v1h-2zM4 6h2v1h-2zM0 7h2v1h-2zM4 7h2v1h-2zM1 8h4v1h-4z"/><path id="g9" d="M1 0h4v1h-4zM0 1h2v1h-2zM4 1h2v1h-2zM0 2h2v1h-2zM4 2h2v1h-2zM0 3h2v1h-2zM4 3h2v1h-2zM1 4h5v1h-5zM4 5h2v1h-2zM4 6h2v1h-2zM0 7h2v1h-2zM4 7h2v1h-2zM1 8h4v1h-4z"/><path id="Gc" d="M0 3h2v1h-2zM0 8h2v1h-2z"/><path id="gA" d="M2 0h2v1h-2zM2 1h2v1h-2zM1 2h4v1h-4zM1 3h4v1h-4zM0 4h2v1h-2zM4 4h2v1h-2zM0 5h2v1h-2zM4 5h2v1h-2zM0 6h6v1h-6zM-1 7h2v1h-2zM5 7h2v1h-2zM-1 8h2v1h-2zM5 8h2v1h-2z"/><path id="gB" d="M0 0h5v1h-5zM0 1h2v1h-2zM4 1h2v1h-2zM0 2h2v1h-2zM4 2h2v1h-2zM0 3h2v1h-2zM4 3h2v1h-2zM0 4h5v1h-5zM0 5h2v1h-2zM4 5h2v1h-2zM0 6h2v1h-2zM4 6h2v1h-2zM0 7h2v1h-2zM4 7h2v1h-2zM0 8h5v1h-5z"/><path id="gC" d="M1 0h5v1h-5zM0 1h2v1h-2zM5 1h2v1h-2zM0 2h2v1h-2zM0 3h2v1h-2zM0 4h2v1h-2zM0 5h2v1h-2zM0 6h2v1h-2zM0 7h2v1h-2zM5 7h2v1h-2zM1 8h5v1h-5z"/><path id="gD" d="M0 0h5v1h-5zM0 1h2v1h-2zM4 1h2v1h-2zM0 2h2v1h-2zM5 2h2v1h-2zM0 3h2v1h-2zM5 3h2v1h-2zM0 4h2v1h-2zM5 4h2v1h-2zM0 5h2v1h-2zM5 5h2v1h-2zM0 6h2v1h-2zM5 6h2v1h-2zM0 7h2v1h-2zM4 7h2v1h-2zM0 8h5v1h-5z"/><path id="gF" d="M0 0h6v1h-6zM0 1h2v1h-2zM0 2h2v1h-2zM0 3h2v1h-2zM0 4h5v1h-5zM0 5h2v1h-2zM0 6h2v1h-2zM0 7h2v1h-2zM0 8h2v1h-2z"/><path id="gH" d="M0 0h2v1h-2zM5 0h2v1h-2zM0 1h2v1h-2zM5 1h2v1h-2zM0 2h2v1h-2zM5 2h2v1h-2zM0 3h2v1h-2zM5 3h2v1h-2zM0 4h7v1h-7zM0 5h2v1h-2zM5 5h2v1h-2zM0 6h2v1h-2zM5 6h2v1h-2zM0 7h2v1h-2zM5 7h2v1h-2zM0 8h2v1h-2zM5 8h2v1h-2z"/><path id="gI" d="M0 0h2v1h-2zM0 1h2v1h-2zM0 2h2v1h-2zM0 3h2v1h-2zM0 4h2v1h-2zM0 5h2v1h-2zM0 6h2v1h-2zM0 7h2v1h-2zM0 8h2v1h-2z"/><path id="gK" d="M0 0h2v1h-2zM4 0h2v1h-2zM0 1h2v1h-2zM3 1h2v1h-2zM0 2h4v1h-4zM0 3h3v1h-3zM0 4h3v1h-3zM0 5h4v1h-4zM0 6h2v1h-2zM3 6h2v1h-2zM0 7h2v1h-2zM4 7h2v1h-2zM0 8h2v1h-2zM5 8h2v1h-2z"/><path id="gO" d="M1 0h5v1h-5zM0 1h2v1h-2zM5 1h2v1h-2zM0 2h2v1h-2zM5 2h2v1h-2zM0 3h2v1h-2zM5 3h2v1h-2zM0 4h2v1h-2zM5 4h2v1h-2zM0 5h2v1h-2zM5 5h2v1h-2zM0 6h2v1h-2zM5 6h2v1h-2zM0 7h2v1h-2zM5 7h2v1h-2zM1 8h5v1h-5z"/><path id="gP" d="M0 0h5v1h-5zM0 1h2v1h-2zM4 1h2v1h-2zM0 2h2v1h-2zM4 2h2v1h-2zM0 3h2v1h-2zM4 3h2v1h-2zM0 4h5v1h-5zM0 5h2v1h-2zM0 6h2v1h-2zM0 7h2v1h-2zM0 8h2v1h-2z"/><path id="gQ" d="M1 0h5v1h-5zM0 1h2v1h-2zM5 1h2v1h-2zM0 2h2v1h-2zM5 2h2v1h-2zM0 3h2v1h-2zM5 3h2v1h-2zM0 4h2v1h-2zM5 4h2v1h-2zM0 5h2v1h-2zM5 5h2v1h-2zM0 6h2v1h-2zM3 6h1v1h-1zM5 6h2v1h-2zM0 7h2v1h-2zM4 7h3v1h-3zM1 8h5v1h-5zM5 9h2v1h-2z"/><path id="gS" d="M1 0h4v1h-4zM0 1h2v1h-2zM4 1h2v1h-2zM0 2h2v1h-2zM0 3h3v1h-3zM1 4h4v1h-4zM3 5h3v1h-3zM4 6h2v1h-2zM0 7h2v1h-2zM4 7h2v1h-2zM1 8h4v1h-4z"/><path id="gT" d="M0 0h6v1h-6zM2 1h2v1h-2zM2 2h2v1h-2zM2 3h2v1h-2zM2 4h2v1h-2zM2 5h2v1h-2zM2 6h2v1h-2zM2 7h2v1h-2zM2 8h2v1h-2z"/><path id="ga" d="M1 3h4v1h-4zM4 4h2v1h-2zM1 5h5v1h-5zM0 6h2v1h-2zM4 6h2v1h-2zM0 7h2v1h-2zM4 7h2v1h-2zM1 8h5v1h-5z"/><path id="gb" d="M0 0h2v1h-2zM0 1h2v1h-2zM0 2h2v1h-2zM0 3h5v1h-5zM0 4h2v1h-2zM4 4h2v1h-2zM0 5h2v1h-2zM4 5h2v1h-2zM0 6h2v1h-2zM4 6h2v1h-2zM0 7h2v1h-2zM4 7h2v1h-2zM0 8h5v1h-5z"/><path id="gc" d="M1 3h4v1h-4zM0 4h2v1h-2zM4 4h2v1h-2zM0 5h2v1h-2zM0 6h2v1h-2zM0 7h2v1h-2zM4 7h2v1h-2zM1 8h4v1h-4z"/><path id="gd" d="M4 0h2v1h-2zM4 1h2v1h-2zM4 2h2v1h-2zM1 3h5v1h-5zM0 4h2v1h-2zM4 4h2v1h-2zM0 5h2v1h-2zM4 5h2v1h-2zM0 6h2v1h-2zM4 6h2v1h-2zM0 7h2v1h-2zM4 7h2v1h-2zM1 8h5v1h-5z"/><path id="ge" d="M1 3h4v1h-4zM0 4h2v1h-2zM4 4h2v1h-2zM0 5h6v1h-6zM0 6h2v1h-2zM0 7h2v1h-2zM4 7h2v1h-2zM1 8h4v1h-4z"/><path id="gh" d="M0 0h2v1h-2zM0 1h2v1h-2zM0 2h2v1h-2zM0 3h5v1h-5zM0 4h2v1h-2zM4 4h2v1h-2zM0 5h2v1h-2zM4 5h2v1h-2zM0 6h2v1h-2zM4 6h2v1h-2zM0 7h2v1h-2zM4 7h2v1h-2zM0 8h2v1h-2zM4 8h2v1h-2z"/><path id="gi" d="M0 0h2v1h-2zM0 3h2v1h-2zM0 4h2v1h-2zM0 5h2v1h-2zM0 6h2v1h-2zM0 7h2v1h-2zM0 8h2v1h-2z"/><path id="gl" d="M0 0h2v1h-2zM0 1h2v1h-2zM0 2h2v1h-2zM0 3h2v1h-2zM0 4h2v1h-2zM0 5h2v1h-2zM0 6h2v1h-2zM0 7h2v1h-2zM0 8h2v1h-2z"/><path id="gm" d="M0 3h7v1h-7zM0 4h2v1h-2zM3 4h2v1h-2zM6 4h2v1h-2zM0 5h2v1h-2zM3 5h2v1h-2zM6 5h2v1h-2zM0 6h2v1h-2zM3 6h2v1h-2zM6 6h2v1h-2zM0 7h2v1h-2zM3 7h2v1h-2zM6 7h2v1h-2zM0 8h2v1h-2zM3 8h2v1h-2zM6 8h2v1h-2z"/><path id="gn" d="M0 3h5v1h-5zM0 4h2v1h-2zM4 4h2v1h-2zM0 5h2v1h-2zM4 5h2v1h-2zM0 6h2v1h-2zM4 6h2v1h-2zM0 7h2v1h-2zM4 7h2v1h-2zM0 8h2v1h-2zM4 8h2v1h-2z"/><path id="go" d="M1 3h4v1h-4zM0 4h2v1h-2zM4 4h2v1h-2zM0 5h2v1h-2zM4 5h2v1h-2zM0 6h2v1h-2zM4 6h2v1h-2zM0 7h2v1h-2zM4 7h2v1h-2zM1 8h4v1h-4z"/><path id="gp" d="M0 3h5v1h-5zM0 4h2v1h-2zM4 4h2v1h-2zM0 5h2v1h-2zM4 5h2v1h-2zM0 6h2v1h-2zM4 6h2v1h-2zM0 7h2v1h-2zM4 7h2v1h-2zM0 8h5v1h-5zM0 9h2v1h-2zM0 10h2v1h-2z"/><path id="gr" d="M0 3h3v1h-3zM0 4h2v1h-2zM0 5h2v1h-2zM0 6h2v1h-2zM0 7h2v1h-2zM0 8h2v1h-2z"/><path id="gs" d="M1 3h3v1h-3zM0 4h2v1h-2zM3 4h2v1h-2zM1 5h2v1h-2zM2 6h2v1h-2zM0 7h2v1h-2zM3 7h2v1h-2zM1 8h3v1h-3z"/><path id="gt" d="M0 1h2v1h-2zM0 2h2v1h-2zM0 3h3v1h-3zM0 4h2v1h-2zM0 5h2v1h-2zM0 6h2v1h-2zM0 7h2v1h-2zM1 8h2v1h-2z"/><path id="gu" d="M0 3h2v1h-2zM4 3h2v1h-2zM0 4h2v1h-2zM4 4h2v1h-2zM0 5h2v1h-2zM4 5h2v1h-2zM0 6h2v1h-2zM4 6h2v1h-2zM0 7h2v1h-2zM4 7h2v1h-2zM1 8h5v1h-5z"/><path id="gv" d="M0 3h2v1h-2zM4 3h2v1h-2zM0 4h2v1h-2zM4 4h2v1h-2zM1 5h4v1h-4zM1 6h4v1h-4zM2 7h2v1h-2zM2 8h2v1h-2z"/><path id="gx" d="M0 3h2v1h-2zM3 3h2v1h-2zM0 4h2v1h-2zM3 4h2v1h-2zM1 5h3v1h-3zM1 6h3v1h-3zM0 7h2v1h-2zM3 7h2v1h-2zM0 8h2v1h-2zM3 8h2v1h-2z"/><path id="gy" d="M0 3h2v1h-2zM3 3h2v1h-2zM0 4h2v1h-2zM3 4h2v1h-2zM0 5h2v1h-2zM3 5h2v1h-2zM0 6h2v1h-2zM3 6h2v1h-2zM1 7h3v1h-3zM1 8h2v1h-2zM1 9h2v1h-2zM-1 10h3v1h-3z"/></defs><use href="#gF" x="18" y="41"/><use href="#gi" x="25" y="41"/><use href="#gn" x="28" y="41"/><use href="#gd" x="35" y="41"/><use href="#gA" x="46" y="41"/><use href="#gB" x="58" y="41"/><use href="#ga" x="66" y="41"/><use href="#gt" x="73" y="41"/><use href="#gc" x="77" y="41"/><use href="#gh" x="84" y="41"/><use href="#go" x="95" y="41"/><use href="#gr" x="102" y="41"/><use href="#gI" x="110" y="41"/><use href="#gn" x="114" y="41"/><use href="#gv" x="121" y="41"/><use href="#go" x="128" y="41"/><use href="#gi" x="135" y="41"/><use href="#gc" x="138" y="41"/><use href="#ge" x="145" y="41"/><use href="#gB" x="156" y="41"/><use href="#gy" x="164" y="41"/><use href="#Gc" x="170" y="41"/><use href="#gB" x="37" y="59"/><use href="#ga" x="45" y="59"/><use href="#gt" x="52" y="59"/><use href="#gc" x="56" y="59"/><use href="#gh" x="63" y="59"/><use href="#Gh" x="74" y="59"/><use href="#gI" x="37" y="83"/><use href="#gn" x="41" y="83"/><use href="#gv" x="48" y="83"/><use href="#go" x="55" y="83"/><use href="#gi" x="62" y="83"/><use href="#gc" x="65" y="83"/><use href="#ge" x="72" y="83"/><use href="#Gh" x="83" y="83"/><use href="#gO" x="420" y="47"/><use href="#gK" x="429" y="47"/><use href="#gC" x="488" y="47"/><use href="#ga" x="496" y="47"/><use href="#gn" x="503" y="47"/><use href="#gc" x="510" y="47"/><use href="#ge" x="517" y="47"/><use href="#gl" x="524" y="47"/><use href="#gH" x="573" y="47"/><use href="#ge" x="582" y="47"/><use href="#gl" x="589" y="47"/><use href="#gp" x="592" y="47"/><use href="#gF" x="354" y="84"/><use href="#gi" x="361" y="84"/><use href="#gn" x="364" y="84"/><use href="#gd" x="371" y="84"/><use href="#gB" x="382" y="84"/><use href="#gy" x="390" y="84"/><use href="#gT" x="400" y="84"/><use href="#gh" x="408" y="84"/><use href="#gi" x="415" y="84"/><use href="#gs" x="418" y="84"/><use href="#gI" x="428" y="84"/><use href="#gn" x="432" y="84"/><use href="#gv" x="439" y="84"/><use href="#go" x="446" y="84"/><use href="#gi" x="453" y="84"/><use href="#gc" x="456" y="84"/><use href="#ge" x="463" y="84"/><use href="#Gh" x="474" y="84"/><use href="#gB" x="18" y="118"/><use href="#ga" x="26" y="118"/><use href="#gt" x="33" y="118"/><use href="#gc" x="37" y="118"/><use href="#gh" x="44" y="118"/><use href="#gK" x="51" y="118"/><use href="#ge" x="59" y="118"/><use href="#gy" x="66" y="118"/><use href="#gI" x="93" y="118"/><use href="#gn" x="97" y="118"/><use href="#gv" x="104" y="118"/><use href="#go" x="111" y="118"/><use href="#gi" x="118" y="118"/><use href="#gc" x="121" y="118"/><use href="#ge" x="128" y="118"/><use href="#Gh" x="139" y="118"/><use href="#gA" x="168" y="118"/><use href="#gc" x="176" y="118"/><use href="#gc" x="183" y="118"/><use href="#go" x="190" y="118"/><use href="#gu" x="197" y="118"/><use href="#gn" x="204" y="118"/><use href="#gt" x="211" y="118"/><use href="#Gh" x="219" y="118"/><use href="#gD" x="248" y="118"/><use href="#ga" x="257" y="118"/><use href="#gt" x="264" y="118"/><use href="#ge" x="268" y="118"/><use href="#gQ" x="293" y="118"/><use href="#gu" x="302" y="118"/><use href="#ga" x="309" y="118"/><use href="#gn" x="316" y="118"/><use href="#gt" x="323" y="118"/><use href="#gi" x="327" y="118"/><use href="#gt" x="330" y="118"/><use href="#gy" x="334" y="118"/><use href="#gS" x="366" y="118"/><use href="#gu" x="374" y="118"/><use href="#gb" x="381" y="118"/><use href="#gt" x="388" y="118"/><use href="#go" x="392" y="118"/><use href="#gt" x="399" y="118"/><use href="#ga" x="403" y="118"/><use href="#gl" x="410" y="118"/><use href="#gT" x="465" y="118"/><use href="#ga" x="473" y="118"/><use href="#gx" x="480" y="118"/><use href="#gT" x="519" y="118"/><use href="#go" x="527" y="118"/><use href="#gt" x="534" y="118"/><use href="#ga" x="538" y="118"/><use href="#gl" x="545" y="118"/><use href="#gP" x="571" y="118"/><use href="#ga" x="579" y="118"/><use href="#gy" x="586" y="118"/><use href="#gm" x="592" y="118"/><use href="#ge" x="601" y="118"/><use href="#gn" x="608" y="118"/><use href="#gt" x="615" y="118"/><use href="#gD" x="627" y="118"/><use href="#gi" x="636" y="118"/><use href="#gs" x="639" y="118"/><use href="#gc" x="645" y="118"/><use href="#go" x="652" y="118"/><use href="#gu" x="659" y="118"/><use href="#gn" x="666" y="118"/><use href="#gt" x="673" y="118"/><use href="#g1" x="52" y="136" fill="#fff"/><use href="#g0" x="59" y="136" fill="#fff"/><use href="#g0" x="66" y="136" fill="#fff"/><use href="#g4" x="73" y="136" fill="#fff"/><use href="#g0" x="80" y="136" fill="#fff"/><use href="#g9" x="134" y="136" fill="#fff"/><use href="#g1" x="141" y="136" fill="#fff"/><use href="#g6" x="148" y="136" fill="#fff"/><use href="#g5" x="155" y="136" fill="#fff"/><use href="#g1" x="191" y="136" fill="#fff"/><use href="#g0" x="198" y="136" fill="#fff"/><use href="#g0" x="205" y="136" fill="#fff"/><use href="#g0" x="212" y="136" fill="#fff"/><use href="#g8" x="219" y="136" fill="#fff"/><use href="#g0" x="232" y="136" fill="#fff"/><use href="#g8" x="239" y="136" fill="#fff"/><use href="#Gm" x="246" y="136" fill="#fff"/><use href="#g0" x="250" y="136" fill="#fff"/><use href="#g1" x="257" y="136" fill="#fff"/><use href="#Gm" x="264" y="136" fill="#fff"/><use href="#g0" x="268" y="136" fill="#fff"/><use href="#g7" x="275" y="136" fill="#fff"/><use href="#Gp" x="337" y="136" fill="#fff"/><use href="#g0" x="341" y="136" fill="#fff"/><use href="#Gp" x="405" y="136" fill="#fff"/><use href="#g0" x="409" y="136" fill="#fff"/><use href="#g0" x="416" y="136" fill="#fff"/><use href="#Gp" x="467" y="136" fill="#fff"/><use href="#g0" x="471" y="136" fill="#fff"/><use href="#g0" x="478" y="136" fill="#fff"/><use href="#Gp" x="535" y="136" fill="#fff"/><use href="#g0" x="539" y="136" fill="#fff"/><use href="#g0" x="546" y="136" fill="#fff"/><use href="#g1" x="582" y="136" fill="#fff"/><use href="#g4" x="589" y="136" fill="#fff"/><use href="#g0" x="596" y="136" fill="#fff"/><use href="#Gp" x="603" y="136" fill="#fff"/><use href="#g0" x="607" y="136" fill="#fff"/><use href="#g0" x="614" y="136" fill="#fff"/><use href="#Gp" x="658" y="136" fill="#fff"/><use href="#g0" x="662" y="136" fill="#fff"/><use href="#g0" x="669" y="136" fill="#fff"/><use href="#g2" x="52" y="153"/><use href="#g5" x="59" y="153"/><use href="#g0" x="66" y="153"/><use href="#g9" x="73" y="153"/><use href="#g5" x="80" y="153"/><use href="#g9" x="134" y="153"/><use href="#g1" x="141" y="153"/><use href="#g6" x="148" y="153"/><use href="#g6" x="155" y="153"/><use href="#g1" x="191" y="153"/><use href="#g0" x="198" y="153"/><use href="#g9" x="205" y="153"/><use href="#g5" x="212" y="153"/><use href="#g2" x="219" y="153"/><use href="#g0" x="232" y="153"/><use href="#g3" x="239" y="153"/><use href="#Gm" x="246" y="153"/><use href="#g3" x="250" y="153"/><use href="#g1" x="257" y="153"/><use href="#Gm" x="264" y="153"/><use href="#g1" x="268" y="153"/><use href="#g5" x="275" y="153"/><use href="#Gp" x="337" y="153"/><use href="#g0" x="341" y="153"/><use href="#Gp" x="405" y="153"/><use href="#g0" x="409" y="153"/><use href="#g0" x="416" y="153"/><use href="#Gp" x="467" y="153"/><use href="#g0" x="471" y="153"/><use href="#g0" x="478" y="153"/><use href="#Gp" x="535" y="153"/><use href="#g0" x="539" y="153"/><use href="#g0" x="546" y="153"/><use href="#g2" x="582" y="153"/><use href="#g5" x="589" y="153"/><use href="#g5" x="596" y="153"/><use href="#Gp" x="603" y="153"/><use href="#g3" x="607" y="153"/><use href="#g3" x="614" y="153"/><use href="#Gp" x="658" y="153"/><use href="#g0" x="662" y="153"/><use href="#g0" x="669" y="153"/><use href="#g3" x="52" y="170"/><use href="#g5" x="59" y="170"/><use href="#g8" x="66" y="170"/><use href="#g3" x="73" y="170"/><use href="#g7" x="80" y="170"/><use href="#g9" x="134" y="170"/><use href="#g1" x="141" y="170"/><use href="#g6" x="148" y="170"/><use href="#g7" x="155" y="170"/><use href="#g1" x="191" y="170"/><use href="#g4" x="198" y="170"/><use href="#g0" x="205" y="170"/><use href="#g0" x="212" y="170"/><use href="#g4" x="219" y="170"/><use href="#g0" x="232" y="170"/><use href="#g2" x="239" y="170"/><use href="#Gm" x="246" y="170"/><use href="#g2" x="250" y="170"/><use href="#g5" x="257" y="170"/><use href="#Gm" x="264" y="170"/><use href="#g1" x="268" y="170"/><use href="#g9" x="275" y="170"/><use href="#Gp" x="337" y="170"/><use href="#g0" x="341" y="170"/><use href="#Gp" x="405" y="170"/><use href="#g0" x="409" y="170"/><use href="#g0" x="416" y="170"/><use href="#Gp" x="467" y="170"/><use href="#g0" x="471" y="170"/><use href="#g0" x="478" y="170"/><use href="#Gp" x="535" y="170"/><use href="#g0" x="539" y="170"/><use href="#g0" x="546" y="170"/><use href="#g2" x="582" y="170"/><use href="#g0" x="589" y="170"/><use href="#g5" x="596" y="170"/><use href="#Gp" x="603" y="170"/><use href="#g5" x="607" y="170"/><use href="#g2" x="614" y="170"/><use href="#Gp" x="658" y="170"/><use href="#g0" x="662" y="170"/><use href="#g0" x="669" y="170"/><use href="#g1" x="52" y="187"/><use href="#g3" x="59" y="187"/><use href="#g9" x="66" y="187"/><use href="#g4" x="73" y="187"/><use href="#g4" x="80" y="187"/><use href="#g9" x="141" y="187"/><use href="#g1" x="148" y="187"/><use href="#g7" x="155" y="187"/><use href="#g1" x="191" y="187"/><use href="#g0" x="198" y="187"/><use href="#g4" x="205" y="187"/><use href="#g2" x="212" y="187"/><use href="#g6" x="219" y="187"/><use href="#g1" x="232" y="187"/><use href="#g2" x="239" y="187"/><use href="#Gm" x="246" y="187"/><use href="#g2" x="250" y="187"/><use href="#g1" x="257" y="187"/><use href="#Gm" x="264" y="187"/><use href="#g0" x="268" y="187"/><use href="#g9" x="275" y="187"/><use href="#Gp" x="337" y="187"/><use href="#g0" x="341" y="187"/><use href="#Gp" x="405" y="187"/><use href="#g0" x="409" y="187"/><use href="#g0" x="416" y="187"/><use href="#Gp" x="467" y="187"/><use href="#g0" x="471" y="187"/><use href="#g0" x="478" y="187"/><use href="#Gp" x="535" y="187"/><use href="#g0" x="539" y="187"/><use href="#g0" x="546" y="187"/><use href="#g3" x="582" y="187"/><use href="#g1" x="589" y="187"/><use href="#g0" x="596" y="187"/><use href="#Gp" x="603" y="187"/><use href="#g0" x="607" y="187"/><use href="#g2" x="614" y="187"/><use href="#Gp" x="658" y="187"/><use href="#g0" x="662" y="187"/><use href="#g0" x="669" y="187"/><use href="#g1" x="52" y="204"/><use href="#g0" x="59" y="204"/><use href="#g0" x="66" y="204"/><use href="#g7" x="73" y="204"/><use href="#g5" x="80" y="204"/><use href="#g9" x="134" y="204"/><use href="#g1" x="141" y="204"/><use href="#g7" x="148" y="204"/><use href="#g0" x="155" y="204"/><use href="#g1" x="191" y="204"/><use href="#g0" x="198" y="204"/><use href="#g0" x="205" y="204"/><use href="#g0" x="212" y="204"/><use href="#g8" x="219" y="204"/><use href="#g0" x="232" y="204"/><use href="#g8" x="239" y="204"/><use href="#Gm" x="246" y="204"/><use href="#g2" x="250" y="204"/><use href="#g4" x="257" y="204"/><use href="#Gm" x="264" y="204"/><use href="#g0" x="268" y="204"/><use href="#g7" x="275" y="204"/><use href="#Gp" x="337" y="204"/><use href="#g0" x="341" y="204"/><use href="#Gp" x="405" y="204"/><use href="#g0" x="409" y="204"/><use href="#g0" x="416" y="204"/><use href="#Gp" x="467" y="204"/><use href="#g0" x="471" y="204"/><use href="#g0" x="478" y="204"/><use href="#Gp" x="535" y="204"/><use href="#g0" x="539" y="204"/><use href="#g0" x="546" y="204"/><use href="#g7" x="589" y="204"/><use href="#g0" x="596" y="204"/><use href="#Gp" x="603" y="204"/><use href="#g0" x="607" y="204"/><use href="#g0" x="614" y="204"/><use href="#Gp" x="658" y="204"/><use href="#g0" x="662" y="204"/><use href="#g0" x="669" y="204"/><use href="#g1" x="52" y="221"/><use href="#g2" x="59" y="221"/><use href="#g1" x="66" y="221"/><use href="#g0" x="73" y="221"/><use href="#g2" x="80" y="221"/><use href="#g9" x="134" y="221"/><use href="#g1" x="141" y="221"/><use href="#g7" x="148" y="221"/><use href="#g0" x="155" y="221"/><use href="#g1" x="191" y="221"/><use href="#g0" x="198" y="221"/><use href="#g3" x="205" y="221"/><use href="#g0" x="212" y="221"/><use href="#g9" x="219" y="221"/><use href="#g0" x="232" y="221"/><use href="#g2" x="239" y="221"/><use href="#Gm" x="246" y="221"/><use href="#g1" x="250" y="221"/><use href="#g1" x="257" y="221"/><use href="#Gm" x="264" y="221"/><use href="#g0" x="268" y="221"/><use href="#g9" x="275" y="221"/><use href="#Gp" x="337" y="221"/><use href="#g0" x="341" y="221"/><use href="#Gp" x="405" y="221"/><use href="#g0" x="409" y="221"/><use href="#g0" x="416" y="221"/><use href="#Gp" x="467" y="221"/><use href="#g0" x="471" y="221"/><use href="#g0" x="478" y="221"/><use href="#Gp" x="535" y="221"/><use href="#g0" x="539" y="221"/><use href="#g0" x="546" y="221"/><use href="#g1" x="582" y="221"/><use href="#g1" x="589" y="221"/><use href="#g5" x="596" y="221"/><use href="#Gp" x="603" y="221"/><use href="#g0" x="607" y="221"/><use href="#g0" x="614" y="221"/><use href="#g4" x="651" y="221"/><use href="#Gp" x="658" y="221"/><use href="#g2" x="662" y="221"/><use href="#g7" x="669" y="221"/><use href="#g1" x="52" y="238"/><use href="#g5" x="59" y="238"/><use href="#g3" x="66" y="238"/><use href="#g8" x="73" y="238"/><use href="#g1" x="80" y="238"/><use href="#g9" x="134" y="238"/><use href="#g1" x="141" y="238"/><use href="#g7" x="148" y="238"/><use href="#g0" x="155" y="238"/><use href="#g1" x="191" y="238"/><use href="#g0" x="198" y="238"/><use href="#g8" x="205" y="238"/><use href="#g5" x="212" y="238"/><use href="#g4" x="219" y="238"/><use href="#g0" x="232" y="238"/><use href="#g7" x="239" y="238"/><use href="#Gm" x="246" y="238"/><use href="#g3" x="250" y="238"/><use href="#g0" x="257" y="238"/><use href="#Gm" x="264" y="238"/><use href="#g1" x="268" y="238"/><use href="#g0" x="275" y="238"/><use href="#Gp" x="337" y="238"/><use href="#g0" x="341" y="238"/><use href="#Gp" x="405" y="238"/><use href="#g0" x="409" y="238"/><use href="#g0" x="416" y="238"/><use href="#Gp" x="467" y="238"/><use href="#g0" x="471" y="238"/><use href="#g0" x="478" y="238"/><use href="#Gp" x="535" y="238"/><use href="#g0" x="539" y="238"/><use href="#g0" x="546" y="238"/><use href="#g2" x="582" y="238"/><use href="#g9" x="589" y="238"/><use href="#g6" x="596" y="238"/><use href="#Gp" x="603" y="238"/><use href="#g9" x="607" y="238"/><use href="#g8" x="614" y="238"/><use href="#Gp" x="658" y="238"/><use href="#g0" x="662" y="238"/><use href="#g0" x="669" y="238"/><use href="#g2" x="52" y="255"/><use href="#g8" x="59" y="255"/><use href="#g9" x="66" y="255"/><use href="#g6" x="73" y="255"/><use href="#g5" x="80" y="255"/><use href="#g9" x="134" y="255"/><use href="#g1" x="141" y="255"/><use href="#g7" x="148" y="255"/><use href="#g0" x="155" y="255"/><use href="#g1" x="191" y="255"/><use href="#g2" x="198" y="255"/><use href="#g3" x="205" y="255"/><use href="#g9" x="212" y="255"/><use href="#g9" x="219" y="255"/><use href="#g0" x="232" y="255"/><use href="#g1" x="239" y="255"/><use href="#Gm" x="246" y="255"/><use href="#g2" x="250" y="255"/><use href="#g3" x="257" y="255"/><use href="#Gm" x="264" y="255"/><use href="#g1" x="268" y="255"/><use href="#g7" x="275" y="255"/><use href="#Gp" x="337" y="255"/><use href="#g0" x="341" y="255"/><use href="#Gp" x="405" y="255"/><use href="#g0" x="409" y="255"/><use href="#g0" x="416" y="255"/><use href="#Gp" x="467" y="255"/><use href="#g0" x="471" y="255"/><use href="#g0" x="478" y="255"/><use href="#Gp" x="535" y="255"/><use href="#g0" x="539" y="255"/><use href="#g0" x="546" y="255"/><use href="#g3" x="582" y="255"/><use href="#g8" x="589" y="255"/><use href="#g3" x="596" y="255"/><use href="#Gp" x="603" y="255"/><use href="#g2" x="607" y="255"/><use href="#g0" x="614" y="255"/><use href="#Gp" x="658" y="255"/><use href="#g0" x="662" y="255"/><use href="#g0" x="669" y="255"/><use href="#g3" x="52" y="272"/><use href="#g6" x="59" y="272"/><use href="#g3" x="66" y="272"/><use href="#g4" x="73" y="272"/><use href="#g2" x="80" y="272"/><use href="#g9" x="134" y="272"/><use href="#g1" x="141" y="272"/><use href="#g7" x="148" y="272"/><use href="#g1" x="155" y="272"/><use href="#g1" x="191" y="272"/><use href="#g4" x="198" y="272"/><use href="#g0" x="205" y="272"/><use href="#g0" x="212" y="272"/><use href="#g4" x="219" y="272"/><use href="#g0" x="232" y="272"/><use href="#g4" x="239" y="272"/><use href="#Gm" x="246" y="272"/><use href="#g1" x="250" y="272"/><use href="#g5" x="257" y="272"/><use href="#Gm" x="264" y="272"/><use href="#g1" x="268" y="272"/><use href="#g9" x="275" y="272"/><use href="#Gp" x="337" y="272"/><use href="#g0" x="341" y="272"/><use href="#Gp" x="405" y="272"/><use href="#g0" x="409" y="272"/><use href="#g0" x="416" y="272"/><use href="#Gp" x="467" y="272"/><use href="#g0" x="471" y="272"/><use href="#g0" x="478" y="272"/><use href="#Gp" x="535" y="272"/><use href="#g0" x="539" y="272"/><use href="#g0" x="546" y="272"/><use href="#g3" x="582" y="272"/><use href="#g1" x="589" y="272"/><use href="#g6" x="596" y="272"/><use href="#Gp" x="603" y="272"/><use href="#g7" x="607" y="272"/><use href="#g1" x="614" y="272"/><use href="#Gp" x="658" y="272"/><use href="#g0" x="662" y="272"/><use href="#g0" x="669" y="272"/><use href="#g2" x="52" y="289"/><use href="#g1" x="59" y="289"/><use href="#g0" x="66" y="289"/><use href="#g3" x="73" y="289"/><use href="#g7" x="80" y="289"/><use href="#g9" x="134" y="289"/><use href="#g1" x="141" y="289"/><use href="#g7" x="148" y="289"/><use href="#g2" x="155" y="289"/><use href="#g1" x="191" y="289"/><use href="#g0" x="198" y="289"/><use href="#g4" x="205" y="289"/><use href="#g9" x="212" y="289"/><use href="#g9" x="219" y="289"/><use href="#g0" x="232" y="289"/><use href="#g3" x="239" y="289"/><use href="#Gm" x="246" y="289"/><use href="#g1" x="250" y="289"/><use href="#g2" x="257" y="289"/><use href="#Gm" x="264" y="289"/><use href="#g1" x="268" y="289"/><use href="#g3" x="275" y="289"/><use href="#Gp" x="337" y="289"/><use href="#g0" x="341" y="289"/><use href="#Gp" x="405" y="289"/><use href="#g0" x="409" y="289"/><use href="#g0" x="416" y="289"/><use href="#Gp" x="467" y="289"/><use href="#g0" x="471" y="289"/><use href="#g0" x="478" y="289"/><use href="#Gp" x="535" y="289"/><use href="#g0" x="539" y="289"/><use href="#g0" x="546" y="289"/><use href="#g6" x="582" y="289"/><use href="#g0" x="589" y="289"/><use href="#g9" x="596" y="289"/><use href="#Gp" x="603" y="289"/><use href="#g7" x="607" y="289"/><use href="#g5" x="614" y="289"/><use href="#Gp" x="658" y="289"/><use href="#g0" x="662" y="289"/><use href="#g0" x="669" y="289"/><use href="#g2" x="52" y="306"/><use href="#g1" x="59" y="306"/><use href="#g4" x="66" y="306"/><use href="#g3" x="73" y="306"/><use href="#g8" x="80" y="306"/><use href="#g9" x="134" y="306"/><use href="#g1" x="141" y="306"/><use href="#g7" x="148" y="306"/><use href="#g3" x="155" y="306"/><use href="#g1" x="191" y="306"/><use href="#g0" x="198" y="306"/><use href="#g3" x="205" y="306"/><use href="#g2" x="212" y="306"/><use href="#g4" x="219" y="306"/><use href="#g0" x="232" y="306"/><use href="#g5" x="239" y="306"/><use href="#Gm" x="246" y="306"/><use href="#g2" x="250" y="306"/><use href="#g0" x="257" y="306"/><use href="#Gm" x="264" y="306"/><use href="#g1" x="268" y="306"/><use href="#g3" x="275" y="306"/><use href="#Gp" x="337" y="306"/><use href="#g0" x="341" y="306"/><use href="#Gp" x="405" y="306"/><use href="#g0" x="409" y="306"/><use href="#g0" x="416" y="306"/><use href="#Gp" x="467" y="306"/><use href="#g0" x="471" y="306"/><use href="#g0" x="478" y="306"/><use href="#Gp" x="535" y="306"/><use href="#g0" x="539" y="306"/><use href="#g0" x="546" y="306"/><use href="#g3" x="582" y="306"/><use href="#g5" x="589" y="306"/><use href="#g8" x="596" y="306"/><use href="#Gp" x="603" y="306"/><use href="#g8" x="607" y="306"/><use href="#g2" x="614" y="306"/><use href="#g7" x="651" y="306"/><use href="#Gp" x="658" y="306"/><use href="#g3" x="662" y="306"/><use href="#g2" x="669" y="306"/><use href="#g2" x="52" y="323"/><use href="#g1" x="59" y="323"/><use href="#g6" x="66" y="323"/><use href="#g7" x="73" y="323"/><use href="#g3" x="80" y="323"/><use href="#g9" x="134" y="323"/><use href="#g1" x="141" y="323"/><use href="#g7" x="148" y="323"/><use href="#g5" x="155" y="323"/><use href="#g1" x="191" y="323"/><use href="#g1" x="198" y="323"/><use href="#g7" x="205" y="323"/><use href="#g8" x="212" y="323"/><use href="#g6" x="219" y="323"/><use href="#g0" x="232" y="323"/><use href="#g7" x="239" y="323"/><use href="#Gm" x="246" y="323"/><use href="#g0" x="250" y="323"/><use href="#g3" x="257" y="323"/><use href="#Gm" x="264" y="323"/><use href="#g1" x="268" y="323"/><use href="#g3" x="275" y="323"/><use href="#Gp" x="337" y="323"/><use href="#g0" x="341" y="323"/><use href="#Gp" x="405" y="323"/><use href="#g0" x="409" y="323"/><use href="#g0" x="416" y="323"/><use href="#Gp" x="467" y="323"/><use href="#g0" x="471" y="323"/><use href="#g0" x="478" y="323"/><use href="#Gp" x="535" y="323"/><use href="#g0" x="539" y="323"/><use href="#g0" x="546" y="323"/><use href="#g2" x="582" y="323"/><use href="#g8" x="589" y="323"/><use href="#g9" x="596" y="323"/><use href="#Gp" x="603" y="323"/><use href="#g8" x="607" y="323"/><use href="#g5" x="614" y="323"/><use href="#Gp" x="658" y="323"/><use href="#g0" x="662" y="323"/><use href="#g0" x="669" y="323"/><use href="#g2" x="52" y="340"/><use href="#g2" x="59" y="340"/><use href="#g3" x="66" y="340"/><use href="#g8" x="73" y="340"/><use href="#g9" x="80" y="340"/><use href="#g9" x="134" y="340"/><use href="#g1" x="141" y="340"/><use href="#g7" x="148" y="340"/><use href="#g5" x="155" y="340"/><use href="#g1" x="191" y="340"/><use href="#g0" x="198" y="340"/><use href="#g1" x="205" y="340"/><use href="#g0" x="212" y="340"/><use href="#g4" x="219" y="340"/><use href="#g1" x="232" y="340"/><use href="#g1" x="239" y="340"/><use href="#Gm" x="246" y="340"/><use href="#g1" x="250" y="340"/><use href="#g9" x="257" y="340"/><use href="#Gm" x="264" y="340"/><use href="#g1" x="268" y="340"/><use href="#g3" x="275" y="340"/><use href="#Gp" x="337" y="340"/><use href="#g0" x="341" y="340"/><use href="#Gp" x="405" y="340"/><use href="#g0" x="409" y="340"/><use href="#g0" x="416" y="340"/><use href="#Gp" x="467" y="340"/><use href="#g0" x="471" y="340"/><use href="#g0" x="478" y="340"/><use href="#Gp" x="535" y="340"/><use href="#g0" x="539" y="340"/><use href="#g0" x="546" y="340"/><use href="#g2" x="582" y="340"/><use href="#g8" x="589" y="340"/><use href="#g7" x="596" y="340"/><use href="#Gp" x="603" y="340"/><use href="#g8" x="607" y="340"/><use href="#g4" x="614" y="340"/><use href="#g5" x="651" y="340"/><use href="#Gp" x="658" y="340"/><use href="#g8" x="662" y="340"/><use href="#g7" x="669" y="340"/><use href="#g3" x="52" y="357"/><use href="#g5" x="59" y="357"/><use href="#g7" x="66" y="357"/><use href="#g0" x="73" y="357"/><use href="#g3" x="80" y="357"/><use href="#g9" x="134" y="357"/><use href="#g1" x="141" y="357"/><use href="#g7" x="148" y="357"/><use href="#g5" x="155" y="357"/><use href="#g1" x="191" y="357"/><use href="#g1" x="198" y="357"/><use href="#g3" x="205" y="357"/><use href="#g3" x="212" y="357"/><use href="#g3" x="219" y="357"/><use href="#g0" x="232" y="357"/><use href="#g2" x="239" y="357"/><use href="#Gm" x="246" y="357"/><use href="#g1" x="250" y="357"/><use href="#g1" x="257" y="357"/><use href="#Gm" x="264" y="357"/><use href="#g1" x="268" y="357"/><use href="#g9" x="275" y="357"/><use href="#Gp" x="337" y="357"/><use href="#g0" x="341" y="357"/><use href="#Gp" x="405" y="357"/><use href="#g0" x="409" y="357"/><use href="#g0" x="416" y="357"/><use href="#Gp" x="467" y="357"/><use href="#g0" x="471" y="357"/><use href="#g0" x="478" y="357"/><use href="#Gp" x="535" y="357"/><use href="#g0" x="539" y="357"/><use href="#g0" x="546" y="357"/><use href="#g1" x="582" y="357"/><use href="#g0" x="589" y="357"/><use href="#g6" x="596" y="357"/><use href="#Gp" x="603" y="357"/><use href="#g2" x="607" y="357"/><use href="#g7" x="614" y="357"/><use href="#Gp" x="658" y="357"/><use href="#g0" x="662" y="357"/><use href="#g0" x="669" y="357"/><use href="#g1" x="52" y="374"/><use href="#g4" x="59" y="374"/><use href="#g6" x="66" y="374"/><use href="#g4" x="73" y="374"/><use href="#g3" x="80" y="374"/><use href="#g9" x="134" y="374"/><use href="#g1" x="141" y="374"/><use href="#g7" x="148" y="374"/><use href="#g6" x="155" y="374"/><use href="#g1" x="191" y="374"/><use href="#g0" x="198" y="374"/><use href="#g2" x="205" y="374"/><use href="#g1" x="212" y="374"/><use href="#g3" x="219" y="374"/><use href="#g0" x="232" y="374"/><use href="#g3" x="239" y="374"/><use href="#Gm" x="246" y="374"/><use href="#g2" x="250" y="374"/><use href="#g9" x="257" y="374"/><use href="#Gm" x="264" y="374"/><use href="#g1" x="268" y="374"/><use href="#g0" x="275" y="374"/><use href="#Gp" x="337" y="374"/><use href="#g0" x="341" y="374"/><use href="#Gp" x="405" y="374"/><use href="#g0" x="409" y="374"/><use href="#g0" x="416" y="374"/><use href="#Gp" x="467" y="374"/><use href="#g0" x="471" y="374"/><use href="#g0" x="478" y="374"/><use href="#Gp" x="535" y="374"/><use href="#g0" x="539" y="374"/><use href="#g0" x="546" y="374"/><use href="#g2" x="582" y="374"/><use href="#g6" x="589" y="374"/><use href="#g6" x="596" y="374"/><use href="#Gp" x="603" y="374"/><use href="#g6" x="607" y="374"/><use href="#g9" x="614" y="374"/><use href="#Gp" x="658" y="374"/><use href="#g0" x="662" y="374"/><use href="#g0" x="669" y="374"/><use href="#g2" x="52" y="391"/><use href="#g0" x="59" y="391"/><use href="#g2" x="66" y="391"/><use href="#g8" x="73" y="391"/><use href="#g5" x="80" y="391"/><use href="#g9" x="134" y="391"/><use href="#g1" x="141" y="391"/><use href="#g7" x="148" y="391"/><use href="#g7" x="155" y="391"/><use href="#g1" x="191" y="391"/><use href="#g1" x="198" y="391"/><use href="#g3" x="205" y="391"/><use href="#g7" x="212" y="391"/><use href="#g5" x="219" y="391"/><use href="#g1" x="232" y="391"/><use href="#g1" x="239" y="391"/><use href="#Gm" x="246" y="391"/><use href="#g2" x="250" y="391"/><use href="#g6" x="257" y="391"/><use href="#Gm" x="264" y="391"/><use href="#g1" x="268" y="391"/><use href="#g2" x="275" y="391"/><use href="#Gp" x="337" y="391"/><use href="#g0" x="341" y="391"/><use href="#Gp" x="405" y="391"/><use href="#g0" x="409" y="391"/><use href="#g0" x="416" y="391"/><use href="#Gp" x="467" y="391"/><use href="#g0" x="471" y="391"/><use href="#g0" x="478" y="391"/><use href="#Gp" x="535" y="391"/><use href="#g0" x="539" y="391"/><use href="#g0" x="546" y="391"/><use href="#g3" x="582" y="391"/><use href="#g9" x="589" y="391"/><use href="#g3" x="596" y="391"/><use href="#Gp" x="603" y="391"/><use href="#g8" x="607" y="391"/><use href="#g8" x="614" y="391"/><use href="#Gp" x="658" y="391"/><use href="#g0" x="662" y="391"/><use href="#g0" x="669" y="391"/><use href="#g2" x="52" y="408"/><use href="#g9" x="59" y="408"/><use href="#g0" x="66" y="408"/><use href="#g7" x="73" y="408"/><use href="#g2" x="80" y="408"/><use href="#g9" x="134" y="408"/><use href="#g1" x="141" y="408"/><use href="#g7" x="148" y="408"/><use href="#g7" x="155" y="408"/><use href="#g1" x="191" y="408"/><use href="#g1" x="198" y="408"/><use href="#g9" x="205" y="408"/><use href="#g4" x="212" y="408"/><use href="#g6" x="219" y="408"/><use href="#g0" x="232" y="408"/><use href="#g2" x="239" y="408"/><use href="#Gm" x="246" y="408"/><use href="#g0" x="250" y="408"/><use href="#g3" x="257" y="408"/><use href="#Gm" x="264" y="408"/><use href="#g1" x="268" y="408"/><use href="#g7" x="275" y="408"/><use href="#Gp" x="337" y="408"/><use href="#g0" x="341" y="408"/><use href="#Gp" x="405" y="408"/><use href="#g0" x="409" y="408"/><use href="#g0" x="416" y="408"/><use href="#Gp" x="467" y="408"/><use href="#g0" x="471" y="408"/><use href="#g0" x="478" y="408"/><use href="#Gp" x="535" y="408"/><use href="#g0" x="539" y="408"/><use href="#g0" x="546" y="408"/><use href="#g2" x="582" y="408"/><use href="#g5" x="589" y="408"/><use href="#g2" x="596" y="408"/><use href="#Gp" x="603" y="408"/><use href="#g2" x="607" y="408"/><use href="#g5" x="614" y="408"/><use href="#Gp" x="658" y="408"/><use href="#g0" x="662" y="408"/><use href="#g0" x="669" y="408"/><use href="#g1" x="52" y="425"/><use href="#g4" x="59" y="425"/><use href="#g6" x="66" y="425"/><use href="#g9" x="73" y="425"/><use href="#g0" x="80" y="425"/><use href="#g9" x="106" y="425"/><use href="#g1" x="113" y="425"/><use href="#g7" x="120" y="425"/><use href="#g8" x="127" y="425"/><use href="#g3" x="134" y="425"/><use href="#g2" x="141" y="425"/><use href="#g5" x="148" y="425"/><use href="#g2" x="155" y="425"/><use href="#g1" x="191" y="425"/><use href="#g0" x="198" y="425"/><use href="#g3" x="205" y="425"/><use href="#g5" x="212" y="425"/><use href="#g5" x="219" y="425"/><use href="#g0" x="232" y="425"/><use href="#g4" x="239" y="425"/><use href="#Gm" x="246" y="425"/><use href="#g0" x="250" y="425"/><use href="#g2" x="257" y="425"/><use href="#Gm" x="264" y="425"/><use href="#g1" x="268" y="425"/><use href="#g0" x="275" y="425"/><use href="#Gp" x="337" y="425"/><use href="#g0" x="341" y="425"/><use href="#Gp" x="405" y="425"/><use href="#g0" x="409" y="425"/><use href="#g0" x="416" y="425"/><use href="#Gp" x="467" y="425"/><use href="#g0" x="471" y="425"/><use href="#g0" x="478" y="425"/><use href="#Gp" x="535" y="425"/><use href="#g0" x="539" y="425"/><use href="#g0" x="546" y="425"/><use href="#g7" x="582" y="425"/><use href="#g8" x="589" y="425"/><use href="#g0" x="596" y="425"/><use href="#Gp" x="603" y="425"/><use href="#g2" x="607" y="425"/><use href="#g2" x="614" y="425"/><use href="#Gp" x="658" y="425"/><use href="#g0" x="662" y="425"/><use href="#g0" x="669" y="425"/><use href="#g3" x="52" y="442"/><use href="#g4" x="59" y="442"/><use href="#g5" x="66" y="442"/><use href="#g5" x="73" y="442"/><use href="#g4" x="80" y="442"/><use href="#g9" x="134" y="442"/><use href="#g1" x="141" y="442"/><use href="#g7" x="148" y="442"/><use href="#g9" x="155" y="442"/><use href="#g1" x="191" y="442"/><use href="#g0" x="198" y="442"/><use href="#g0" x="205" y="442"/><use href="#g8" x="212" y="442"/><use href="#g5" x="219" y="442"/><use href="#g1" x="232" y="442"/><use href="#g1" x="239" y="442"/><use href="#Gm" x="246" y="442"/><use href="#g0" x="250" y="442"/><use href="#g2" x="257" y="442"/><use href="#Gm" x="264" y="442"/><use href="#g1" x="268" y="442"/><use href="#g8" x="275" y="442"/><use href="#Gp" x="337" y="442"/><use href="#g0" x="341" y="442"/><use href="#Gp" x="405" y="442"/><use href="#g0" x="409" y="442"/><use href="#g0" x="416" y="442"/><use href="#Gp" x="467" y="442"/><use href="#g0" x="471" y="442"/><use href="#g0" x="478" y="442"/><use href="#Gp" x="535" y="442"/><use href="#g0" x="539" y="442"/><use href="#g0" x="546" y="442"/><use href="#g9" x="589" y="442"/><use href="#g3" x="596" y="442"/><use href="#Gp" x="603" y="442"/><use href="#g5" x="607" y="442"/><use href="#g0" x="614" y="442"/><use href="#Gp" x="658" y="442"/><use href="#g0" x="662" y="442"/><use href="#g0" x="669" y="442"/><use href="#g2" x="52" y="459"/><use href="#g0" x="59" y="459"/><use href="#g7" x="66" y="459"/><use href="#g9" x="73" y="459"/><use href="#g0" x="80" y="459"/><use href="#g9" x="134" y="459"/><use href="#g1" x="141" y="459"/><use href="#g8" x="148" y="459"/><use href="#g0" x="155" y="459"/><use href="#g1" x="191" y="459"/><use href="#g1" x="198" y="459"/><use href="#g3" x="205" y="459"/><use href="#g2" x="212" y="459"/><use href="#g0" x="219" y="459"/><use href="#g0" x="232" y="459"/><use href="#g1" x="239" y="459"/><use href="#Gm" x="246" y="459"/><use href="#g3" x="250" y="459"/><use href="#g1" x="257" y="459"/><use href="#Gm" x="264" y="459"/><use href="#g1" x="268" y="459"/><use href="#g3" x="275" y="459"/><use href="#Gp" x="337" y="459"/><use href="#g0" x="341" y="459"/><use href="#Gp" x="405" y="459"/><use href="#g0" x="409" y="459"/><use href="#g0" x="416" y="459"/><use href="#Gp" x="467" y="459"/><use href="#g0" x="471" y="459"/><use href="#g0" x="478" y="459"/><use href="#Gp" x="535" y="459"/><use href="#g0" x="539" y="459"/><use href="#g0" x="546" y="459"/><use href="#g4" x="582" y="459"/><use href="#g2" x="589" y="459"/><use href="#g2" x="596" y="459"/><use href="#Gp" x="603" y="459"/><use href="#g7" x="607" y="459"/><use href="#g3" x="614" y="459"/><use href="#Gp" x="658" y="459"/><use href="#g0" x="662" y="459"/><use href="#g0" x="669" y="459"/><use href="#g2" x="52" y="476"/><use href="#g4" x="59" y="476"/><use href="#g4" x="66" y="476"/><use href="#g1" x="73" y="476"/><use href="#g2" x="80" y="476"/><use href="#g9" x="134" y="476"/><use href="#g1" x="141" y="476"/><use href="#g8" x="148" y="476"/><use href="#g0" x="155" y="476"/><use href="#g1" x="191" y="476"/><use href="#g1" x="198" y="476"/><use href="#g3" x="205" y="476"/><use href="#g4" x="212" y="476"/><use href="#g3" x="219" y="476"/><use href="#g1" x="232" y="476"/><use href="#g1" x="239" y="476"/><use href="#Gm" x="246" y="476"/><use href="#g2" x="250" y="476"/><use href="#g1" x="257" y="476"/><use href="#Gm" x="264" y="476"/><use href="#g1" x="268" y="476"/><use href="#g4" x="275" y="476"/><use href="#Gp" x="337" y="476"/><use href="#g0" x="341" y="476"/><use href="#Gp" x="405" y="476"/><use href="#g0" x="409" y="476"/><use href="#g0" x="416" y="476"/><use href="#Gp" x="467" y="476"/><use href="#g0" x="471" y="476"/><use href="#g0" x="478" y="476"/><use href="#Gp" x="535" y="476"/><use href="#g0" x="539" y="476"/><use href="#g0" x="546" y="476"/><use href="#g5" x="589" y="476"/><use href="#g6" x="596" y="476"/><use href="#Gp" x="603" y="476"/><use href="#g8" x="607" y="476"/><use href="#g1" x="614" y="476"/><use href="#Gp" x="658" y="476"/><use href="#g0" x="662" y="476"/><use href="#g0" x="669" y="476"/><use href="#g1" x="52" y="493"/><use href="#g1" x="59" y="493"/><use href="#g7" x="66" y="493"/><use href="#g7" x="73" y="493"/><use href="#g2" x="80" y="493"/><use href="#g9" x="134" y="493"/><use href="#g1" x="141" y="493"/><use href="#g8" x="148" y="493"/><use href="#g1" x="155" y="493"/><use href="#g1" x="191" y="493"/><use href="#g0" x="198" y="493"/><use href="#g3" x="205" y="493"/><use href="#g8" x="212" y="493"/><use href="#g4" x="219" y="493"/><use href="#g0" x="232" y="493"/><use href="#g1" x="239" y="493"/><use href="#Gm" x="246" y="493"/><use href="#g0" x="250" y="493"/><use href="#g8" x="257" y="493"/><use href="#Gm" x="264" y="493"/><use href="#g0" x="268" y="493"/><use href="#g9" x="275" y="493"/><use href="#Gp" x="337" y="493"/><use href="#g0" x="341" y="493"/><use href="#Gp" x="405" y="493"/><use href="#g0" x="409" y="493"/><use href="#g0" x="416" y="493"/><use href="#Gp" x="467" y="493"/><use href="#g0" x="471" y="493"/><use href="#g0" x="478" y="493"/><use href="#Gp" x="535" y="493"/><use href="#g0" x="539" y="493"/><use href="#g0" x="546" y="493"/><use href="#g2" x="589" y="493"/><use href="#g0" x="596" y="493"/><use href="#Gp" x="603" y="493"/><use href="#g0" x="607" y="493"/><use href="#g5" x="614" y="493"/><use href="#Gp" x="658" y="493"/><use href="#g0" x="662" y="493"/><use href="#g0" x="669" y="493"/><use href="#g2" x="52" y="510"/><use href="#g2" x="59" y="510"/><use href="#g4" x="66" y="510"/><use href="#g4" x="73" y="510"/><use href="#g3" x="80" y="510"/><use href="#g9" x="134" y="510"/><use href="#g1" x="141" y="510"/><use href="#g8" x="148" y="510"/><use href="#g2" x="155" y="510"/><use href="#g1" x="191" y="510"/><use href="#g1" x="198" y="510"/><use href="#g6" x="205" y="510"/><use href="#g5" x="212" y="510"/><use href="#g5" x="219" y="510"/><use href="#g1" x="232" y="510"/><use href="#g2" x="239" y="510"/><use href="#Gm" x="246" y="510"/><use href="#g0" x="250" y="510"/><use href="#g2" x="257" y="510"/><use href="#Gm" x="264" y="510"/><use href="#g1" x="268" y="510"/><use href="#g3" x="275" y="510"/><use href="#Gp" x="337" y="510"/><use href="#g0" x="341" y="510"/><use href="#Gp" x="405" y="510"/><use href="#g0" x="409" y="510"/><use href="#g0" x="416" y="510"/><use href="#Gp" x="467" y="510"/><use href="#g0" x="471" y="510"/><use href="#g0" x="478" y="510"/><use href="#Gp" x="535" y="510"/><use href="#g0" x="539" y="510"/><use href="#g0" x="546" y="510"/><use href="#g6" x="582" y="510"/><use href="#g3" x="589" y="510"/><use href="#g0" x="596" y="510"/><use href="#Gp" x="603" y="510"/><use href="#g8" x="607" y="510"/><use href="#g4" x="614" y="510"/><use href="#Gp" x="658" y="510"/><use href="#g0" x="662" y="510"/><use href="#g0" x="669" y="510"/><use href="#g2" x="52" y="527"/><use href="#g1" x="59" y="527"/><use href="#g4" x="66" y="527"/><use href="#g3" x="73" y="527"/><use href="#g8" x="80" y="527"/><use href="#g9" x="134" y="527"/><use href="#g1" x="141" y="527"/><use href="#g8" x="148" y="527"/><use href="#g4" x="155" y="527"/><use href="#g1" x="191" y="527"/><use href="#g1" x="198" y="527"/><use href="#g2" x="205" y="527"/><use href="#g8" x="212" y="527"/><use href="#g1" x="219" y="527"/><use href="#g0" x="232" y="527"/><use href="#g5" x="239" y="527"/><use href="#Gm" x="246" y="527"/><use href="#g2" x="250" y="527"/><use href="#g0" x="257" y="527"/><use href="#Gm" x="264" y="527"/><use href="#g1" x="268" y="527"/><use href="#g3" x="275" y="527"/><use href="#Gp" x="337" y="527"/><use href="#g0" x="341" y="527"/><use href="#Gp" x="405" y="527"/><use href="#g0" x="409" y="527"/><use href="#g0" x="416" y="527"/><use href="#Gp" x="467" y="527"/><use href="#g0" x="471" y="527"/><use href="#g0" x="478" y="527"/><use href="#Gp" x="535" y="527"/><use href="#g0" x="539" y="527"/><use href="#g0" x="546" y="527"/><use href="#g2" x="582" y="527"/><use href="#g0" x="589" y="527"/><use href="#g0" x="596" y="527"/><use href="#Gp" x="603" y="527"/><use href="#g0" x="607" y="527"/><use href="#g0" x="614" y="527"/><use href="#Gp" x="658" y="527"/><use href="#g0" x="662" y="527"/><use href="#g0" x="669" y="527"/><use href="#g3" x="52" y="544"/><use href="#g1" x="59" y="544"/><use href="#g6" x="66" y="544"/><use href="#g6" x="73" y="544"/><use href="#g7" x="80" y="544"/><use href="#g9" x="134" y="544"/><use href="#g1" x="141" y="544"/><use href="#g8" x="148" y="544"/><use href="#g4" x="155" y="544"/><use href="#g1" x="191" y="544"/><use href="#g0" x="198" y="544"/><use href="#g0" x="205" y="544"/><use href="#g2" x="212" y="544"/><use href="#g1" x="219" y="544"/><use href="#g1" x="232" y="544"/><use href="#g2" x="239" y="544"/><use href="#Gm" x="246" y="544"/><use href="#g1" x="250" y="544"/><use href="#g2" x="257" y="544"/><use href="#Gm" x="264" y="544"/><use href="#g1" x="268" y="544"/><use href="#g7" x="275" y="544"/><use href="#Gp" x="337" y="544"/><use href="#g0" x="341" y="544"/><use href="#Gp" x="405" y="544"/><use href="#g0" x="409" y="544"/><use href="#g0" x="416" y="544"/><use href="#Gp" x="467" y="544"/><use href="#g0" x="471" y="544"/><use href="#g0" x="478" y="544"/><use href="#Gp" x="535" y="544"/><use href="#g0" x="539" y="544"/><use href="#g0" x="546" y="544"/><use href="#g2" x="582" y="544"/><use href="#g9" x="589" y="544"/><use href="#g4" x="596" y="544"/><use href="#Gp" x="603" y="544"/><use href="#g1" x="607" y="544"/><use href="#g8" x="614" y="544"/><use href="#Gp" x="658" y="544"/><use href="#g0" x="662" y="544"/><use href="#g0" x="669" y="544"/></svg>
<div class="a" style="left:767px;top:114px;width:16px;height:457px;background:#f0f0f0"></div>
<svg class="a" style="left:771px;top:120px" width="7" height="6" shape-rendering="crispEdges"><rect x="3" y="0" width="1" height="1" fill="#606060"/><rect x="2" y="1" width="3" height="1" fill="#606060"/><rect x="1" y="2" width="5" height="1" fill="#606060"/><rect x="0" y="3" width="3" height="1" fill="#606060"/><rect x="4" y="3" width="3" height="1" fill="#606060"/><rect x="0" y="4" width="2" height="1" fill="#606060"/><rect x="5" y="4" width="2" height="1" fill="#606060"/><rect x="0" y="5" width="1" height="1" fill="#606060"/><rect x="6" y="5" width="1" height="1" fill="#606060"/></svg>
<svg class="a" style="left:771px;top:560px" width="7" height="6" shape-rendering="crispEdges"><rect x="0" y="0" width="1" height="1" fill="#606060"/><rect x="6" y="0" width="1" height="1" fill="#606060"/><rect x="0" y="1" width="2" height="1" fill="#606060"/><rect x="5" y="1" width="2" height="1" fill="#606060"/><rect x="0" y="2" width="3" height="1" fill="#606060"/><rect x="4" y="2" width="3" height="1" fill="#606060"/><rect x="1" y="3" width="5" height="1" fill="#606060"/><rect x="2" y="4" width="3" height="1" fill="#606060"/><rect x="3" y="5" width="1" height="1" fill="#606060"/></svg>
<div class="a" style="left:767px;top:334px;width:15px;height:17px;background:#cdcdcd"></div>
<div class="a" style="left:1px;top:573px;width:784px;height:2px;background:#fff"></div>
<div class="a" style="left:1px;top:575px;width:783px;height:1px;background:#a0a0a0"></div>
<div class="a" style="left:1px;top:591px;width:784px;height:1px;background:#fff"></div>
<div class="a" style="left:1px;top:576px;width:1px;height:15px;background:#fff"></div>
<div class="a" style="left:784px;top:573px;width:1px;height:19px;background:#fff"></div>
<svg class="a" style="left:772px;top:579px" width="12" height="12" shape-rendering="crispEdges"><rect x="11" y="0" width="1" height="1" fill="#fff"/><rect x="10" y="1" width="1" height="1" fill="#fff"/><rect x="11" y="1" width="1" height="1" fill="#a0a0a0"/><rect x="9" y="2" width="1" height="1" fill="#fff"/><rect x="10" y="2" width="2" height="1" fill="#a0a0a0"/><rect x="8" y="3" width="1" height="1" fill="#fff"/><rect x="9" y="3" width="2" height="1" fill="#a0a0a0"/><rect x="7" y="4" width="1" height="1" fill="#fff"/><rect x="8" y="4" width="2" height="1" fill="#a0a0a0"/><rect x="11" y="4" width="1" height="1" fill="#fff"/><rect x="6" y="5" width="1" height="1" fill="#fff"/><rect x="7" y="5" width="2" height="1" fill="#a0a0a0"/><rect x="10" y="5" width="1" height="1" fill="#fff"/><rect x="11" y="5" width="1" height="1" fill="#a0a0a0"/><rect x="5" y="6" width="1" height="1" fill="#fff"/><rect x="6" y="6" width="2" height="1" fill="#a0a0a0"/><rect x="9" y="6" width="1" height="1" fill="#fff"/><rect x="10" y="6" width="2" height="1" fill="#a0a0a0"/><rect x="4" y="7" width="1" height="1" fill="#fff"/><rect x="5" y="7" width="2" height="1" fill="#a0a0a0"/><rect x="8" y="7" width="1" height="1" fill="#fff"/><rect x="9" y="7" width="2" height="1" fill="#a0a0a0"/><rect x="3" y="8" width="1" height="1" fill="#fff"/><rect x="4" y="8" width="2" height="1" fill="#a0a0a0"/><rect x="7" y="8" width="1" height="1" fill="#fff"/><rect x="8" y="8" width="2" height="1" fill="#a0a0a0"/><rect x="11" y="8" width="1" height="1" fill="#fff"/><rect x="2" y="9" width="1" height="1" fill="#fff"/><rect x="3" y="9" width="2" height="1" fill="#a0a0a0"/><rect x="6" y="9" width="1" height="1" fill="#fff"/><rect x="7" y="9" width="2" height="1" fill="#a0a0a0"/><rect x="10" y="9" width="1" height="1" fill="#fff"/><rect x="11" y="9" width="1" height="1" fill="#a0a0a0"/><rect x="1" y="10" width="1" height="1" fill="#fff"/><rect x="2" y="10" width="2" height="1" fill="#a0a0a0"/><rect x="5" y="10" width="1" height="1" fill="#fff"/><rect x="6" y="10" width="2" height="1" fill="#a0a0a0"/><rect x="9" y="10" width="1" height="1" fill="#fff"/><rect x="10" y="10" width="2" height="1" fill="#a0a0a0"/><rect x="0" y="11" width="1" height="1" fill="#fff"/><rect x="1" y="11" width="2" height="1" fill="#a0a0a0"/><rect x="4" y="11" width="1" height="1" fill="#fff"/><rect x="5" y="11" width="2" height="1" fill="#a0a0a0"/><rect x="8" y="11" width="1" height="1" fill="#fff"/><rect x="9" y="11" width="2" height="1" fill="#a0a0a0"/></svg>
</body></html>
